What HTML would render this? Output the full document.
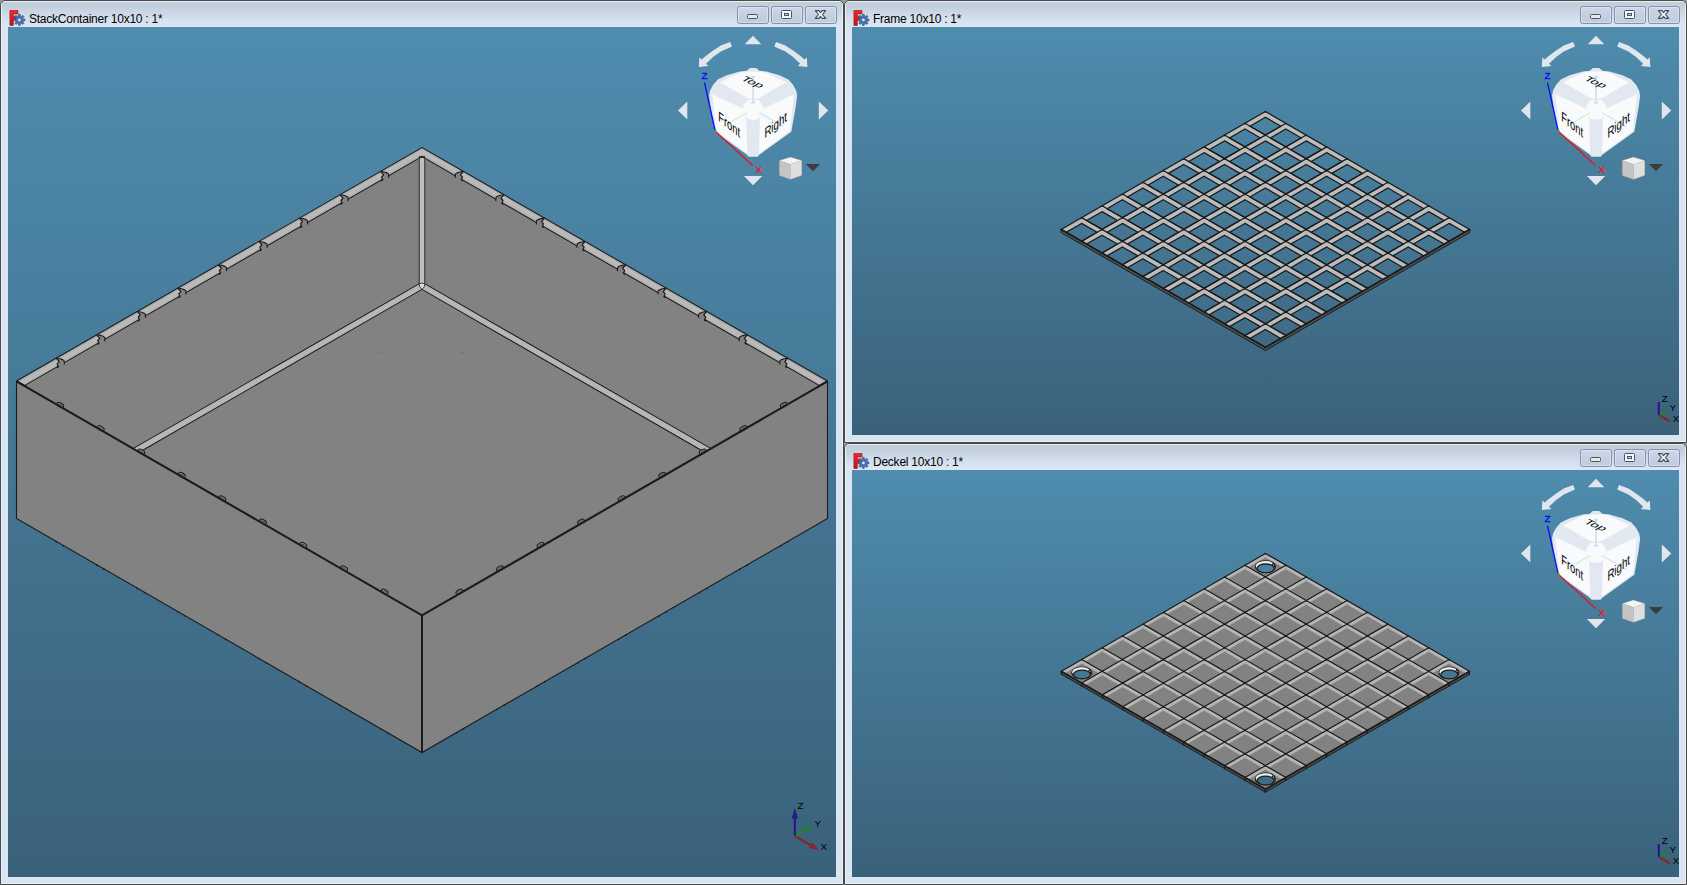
<!DOCTYPE html>
<html><head><meta charset="utf-8"><title>FreeCAD</title>
<style>
html,body{margin:0;padding:0;}
body{width:1687px;height:885px;overflow:hidden;background:#9c9c9c;position:relative;font-family:"Liberation Sans",sans-serif;}
.win{position:absolute;box-sizing:border-box;background:#dae5f3;border:1px solid #4a4a4a;border-radius:5px 5px 0 0;overflow:hidden;box-shadow:inset 0 0 0 1px #e9eff8;}
.win .tb{position:absolute;left:1px;top:1px;right:1px;height:25px;background:linear-gradient(to bottom,#c0cddb 0px,#c5d2e0 7px,#d4dfed 16px,#dbe6f4 23px);}
.win .hl{position:absolute;left:0;top:0;bottom:0;width:1px;background:#eef3fa;}
.ttl{position:absolute;top:10px;font-size:12px;line-height:16px;color:#000;white-space:nowrap;letter-spacing:-0.24px;}
.vp{position:absolute;overflow:hidden;background:linear-gradient(to bottom,#4f8cae,#3a617a);}
.vp svg{position:absolute;left:0;top:0;}
.btn{position:absolute;top:5px;width:32px;height:18px;box-sizing:border-box;border:1px solid #8490ad;border-radius:2.5px;background:linear-gradient(to bottom,#ccd8e7 0,#c4d0e2 50%,#bfccdf 100%);box-shadow:inset 0 0 0 1px rgba(235,241,250,0.45);}
.btn svg{position:absolute;left:0;top:0;}
</style></head><body>
<div class="win" style="left:0px;top:0px;width:844px;height:885px">
<div class="tb"></div>
<svg style="position:absolute;left:7.5px;top:8px" width="18" height="18" viewBox="0 0 18 18">
<defs><linearGradient id="fg" x1="0" y1="0" x2="0" y2="1"><stop offset="0" stop-color="#ff2424"/><stop offset="1" stop-color="#c81212"/></linearGradient></defs>
<path d="M0.9 1.5 H9.0 V4.9 H4.3 V7.2 H7.6 V10.2 H4.3 V16.4 H0.9 Z" fill="url(#fg)" stroke="#8c0f0f" stroke-width="0.6"/>
<g transform="translate(10.4,10.9)">
<path d="M5.64 -0.80 L5.64 0.80 L3.87 0.99 L3.44 2.04 L4.56 3.42 L3.42 4.56 L2.04 3.44 L0.99 3.87 L0.80 5.64 L-0.80 5.64 L-0.99 3.87 L-2.04 3.44 L-3.42 4.56 L-4.56 3.42 L-3.44 2.04 L-3.87 0.99 L-5.64 0.80 L-5.64 -0.80 L-3.87 -0.99 L-3.44 -2.04 L-4.56 -3.42 L-3.42 -4.56 L-2.04 -3.44 L-0.99 -3.87 L-0.80 -5.64 L0.80 -5.64 L0.99 -3.87 L2.04 -3.44 L3.42 -4.56 L4.56 -3.42 L3.44 -2.04 L3.87 -0.99 Z" fill="#4a72b0" stroke="#2d4d85" stroke-width="0.6"/>
<circle r="1.7" fill="#eef2f8" stroke="#2d4d85" stroke-width="0.5"/>
</g></svg>
<div class="ttl" style="left:28px;top:10px">StackContainer 10x10 : 1*</div>
<div class="btn" style="left:736px"><svg width="30" height="16" viewBox="1 1 30 16"><rect x="10.5" y="8.5" width="10" height="4" rx="1" fill="#e9e9e4" stroke="#4a5160" stroke-width="1"/></svg></div><div class="btn" style="left:770px"><svg width="30" height="16" viewBox="1 1 30 16"><rect x="10.5" y="4.5" width="10" height="8" rx="1" fill="#f4f6fa" stroke="#4a5160" stroke-width="1"/><rect x="13.5" y="7.5" width="4" height="2" fill="#c6d2e3" stroke="#4a5160" stroke-width="1"/></svg></div><div class="btn" style="left:804px"><svg width="30" height="16" viewBox="1 1 30 16"><path d="M10.3 4.6 L13.9 4.6 L15.5 6.6 L17.1 4.6 L20.7 4.6 L17.5 8.5 L20.7 12.4 L17.1 12.4 L15.5 10.4 L13.9 12.4 L10.3 12.4 L13.5 8.5 Z" fill="#f1f2f2" stroke="#454b59" stroke-width="1.1" stroke-linejoin="round"/></svg></div>
<div class="vp" style="left:7px;top:26px;width:828px;height:850px">
<svg width="828" height="850" viewBox="8 27 828 850">
<defs><linearGradient id="bg_w1" gradientUnits="userSpaceOnUse" x1="0" y1="27" x2="0" y2="877"><stop offset="0" stop-color="#4f8cae"/><stop offset="1" stop-color="#3a617a"/></linearGradient></defs>
<polygon points="16.50,381.00 422.00,147.50 827.50,381.00 827.50,518.50 422.00,752.50 16.50,518.50" fill="#828282"/>
<defs><linearGradient id="rimgR" gradientUnits="userSpaceOnUse" x1="422.0" y1="147.5" x2="418.05" y2="154.34"><stop offset="0" stop-color="#a2a2a2"/><stop offset="0.3" stop-color="#bbbbbb"/><stop offset="0.65" stop-color="#b8b8b8"/><stop offset="1" stop-color="#a9a9a9"/></linearGradient><linearGradient id="rimgL" gradientUnits="userSpaceOnUse" x1="422.0" y1="147.5" x2="425.95" y2="154.34"><stop offset="0" stop-color="#a2a2a2"/><stop offset="0.3" stop-color="#bbbbbb"/><stop offset="0.65" stop-color="#b8b8b8"/><stop offset="1" stop-color="#a9a9a9"/></linearGradient></defs>
<polygon points="16.50,381.00 422.00,147.50 422.00,156.65 24.45,385.58" fill="url(#rimgL)"/>
<polygon points="422.00,147.50 827.50,381.00 819.55,385.58 422.00,156.65" fill="url(#rimgR)"/>
<polyline points="24.45,385.58 422.00,156.65 819.55,385.58" fill="none" stroke="#1b1b1b" stroke-width="1.05"/>
<rect x="417.6" y="158.15320000000003" width="8.8" height="125.84679999999997" fill="#6c6c6c" fill-opacity="0.55"/>
<rect x="419.4" y="156.65320000000003" width="5.2" height="129.34679999999997" fill="#bebebe"/>
<line x1="419.4" y1="156.65320000000003" x2="419.4" y2="285.0" stroke="#4a4a4a" stroke-width="1.1"/>
<line x1="424.6" y1="156.65320000000003" x2="424.6" y2="285.0" stroke="#4a4a4a" stroke-width="1.1"/>
<path d="M419.0 157.65320000000003 Q422.0 156.05320000000003 425.0 157.65320000000003" fill="none" stroke="#1b1b1b" stroke-width="1.8"/>
<polygon points="419.00,283.90 133.44,448.34 139.71,451.95 422.00,289.40" fill="#b6b6b6"/>
<polygon points="425.00,283.90 710.56,448.34 704.29,451.95 422.00,289.40" fill="#b6b6b6"/>
<line x1="419.00" y1="283.90" x2="133.44" y2="448.34" stroke="#1b1b1b" stroke-width="1.05"/>
<line x1="422.00" y1="289.40" x2="139.71" y2="451.95" stroke="#1b1b1b" stroke-width="1.05"/>
<line x1="425.00" y1="283.90" x2="710.56" y2="448.34" stroke="#1b1b1b" stroke-width="1.05"/>
<line x1="422.00" y1="289.40" x2="704.29" y2="451.95" stroke="#1b1b1b" stroke-width="1.05"/>
<path d="M419.0 283.9 Q422.0 282.2 425.0 283.9 Q424.6 287.6 422.0 289.4 Q419.4 287.6 419.0 283.9 Z" fill="#dcdcdc" stroke="#1b1b1b" stroke-width="0.8"/>
<rect x="380.2" y="352" width="2" height="1" fill="#6c6c6c"/><rect x="461.4" y="352" width="2" height="1" fill="#6c6c6c"/>
<polygon points="380.55,171.35 384.05,171.95 387.05,172.85 388.55,173.95 388.55,176.95 381.05,181.35 382.85,179.85 381.55,177.15 383.55,174.85" fill="#828282"/><polyline points="380.55,171.35 384.05,171.95 387.05,172.85 388.55,173.95 388.75,177.75" fill="none" stroke="#1b1b1b" stroke-width="1.1" stroke-linejoin="round"/><polyline points="380.55,171.35 383.55,174.85 381.55,177.15 382.85,179.85 381.05,181.05" fill="none" stroke="#1b1b1b" stroke-width="1.2" stroke-linejoin="round"/>
<polygon points="463.45,171.35 459.95,171.95 456.95,172.85 455.45,173.95 455.45,176.95 462.95,181.35 461.15,179.85 462.45,177.15 460.45,174.85" fill="#828282"/><polyline points="463.45,171.35 459.95,171.95 456.95,172.85 455.45,173.95 455.25,177.75" fill="none" stroke="#1b1b1b" stroke-width="1.1" stroke-linejoin="round"/><polyline points="463.45,171.35 460.45,174.85 462.45,177.15 461.15,179.85 462.95,181.05" fill="none" stroke="#1b1b1b" stroke-width="1.2" stroke-linejoin="round"/>
<polygon points="340.00,194.70 343.50,195.30 346.50,196.20 348.00,197.30 348.00,200.30 340.50,204.70 342.30,203.20 341.00,200.50 343.00,198.20" fill="#828282"/><polyline points="340.00,194.70 343.50,195.30 346.50,196.20 348.00,197.30 348.20,201.10" fill="none" stroke="#1b1b1b" stroke-width="1.1" stroke-linejoin="round"/><polyline points="340.00,194.70 343.00,198.20 341.00,200.50 342.30,203.20 340.50,204.40" fill="none" stroke="#1b1b1b" stroke-width="1.2" stroke-linejoin="round"/>
<polygon points="504.00,194.70 500.50,195.30 497.50,196.20 496.00,197.30 496.00,200.30 503.50,204.70 501.70,203.20 503.00,200.50 501.00,198.20" fill="#828282"/><polyline points="504.00,194.70 500.50,195.30 497.50,196.20 496.00,197.30 495.80,201.10" fill="none" stroke="#1b1b1b" stroke-width="1.1" stroke-linejoin="round"/><polyline points="504.00,194.70 501.00,198.20 503.00,200.50 501.70,203.20 503.50,204.40" fill="none" stroke="#1b1b1b" stroke-width="1.2" stroke-linejoin="round"/>
<polygon points="299.45,218.05 302.95,218.65 305.95,219.55 307.45,220.65 307.45,223.65 299.95,228.05 301.75,226.55 300.45,223.85 302.45,221.55" fill="#828282"/><polyline points="299.45,218.05 302.95,218.65 305.95,219.55 307.45,220.65 307.65,224.45" fill="none" stroke="#1b1b1b" stroke-width="1.1" stroke-linejoin="round"/><polyline points="299.45,218.05 302.45,221.55 300.45,223.85 301.75,226.55 299.95,227.75" fill="none" stroke="#1b1b1b" stroke-width="1.2" stroke-linejoin="round"/>
<polygon points="544.55,218.05 541.05,218.65 538.05,219.55 536.55,220.65 536.55,223.65 544.05,228.05 542.25,226.55 543.55,223.85 541.55,221.55" fill="#828282"/><polyline points="544.55,218.05 541.05,218.65 538.05,219.55 536.55,220.65 536.35,224.45" fill="none" stroke="#1b1b1b" stroke-width="1.1" stroke-linejoin="round"/><polyline points="544.55,218.05 541.55,221.55 543.55,223.85 542.25,226.55 544.05,227.75" fill="none" stroke="#1b1b1b" stroke-width="1.2" stroke-linejoin="round"/>
<polygon points="258.90,241.40 262.40,242.00 265.40,242.90 266.90,244.00 266.90,247.00 259.40,251.40 261.20,249.90 259.90,247.20 261.90,244.90" fill="#828282"/><polyline points="258.90,241.40 262.40,242.00 265.40,242.90 266.90,244.00 267.10,247.80" fill="none" stroke="#1b1b1b" stroke-width="1.1" stroke-linejoin="round"/><polyline points="258.90,241.40 261.90,244.90 259.90,247.20 261.20,249.90 259.40,251.10" fill="none" stroke="#1b1b1b" stroke-width="1.2" stroke-linejoin="round"/>
<polygon points="585.10,241.40 581.60,242.00 578.60,242.90 577.10,244.00 577.10,247.00 584.60,251.40 582.80,249.90 584.10,247.20 582.10,244.90" fill="#828282"/><polyline points="585.10,241.40 581.60,242.00 578.60,242.90 577.10,244.00 576.90,247.80" fill="none" stroke="#1b1b1b" stroke-width="1.1" stroke-linejoin="round"/><polyline points="585.10,241.40 582.10,244.90 584.10,247.20 582.80,249.90 584.60,251.10" fill="none" stroke="#1b1b1b" stroke-width="1.2" stroke-linejoin="round"/>
<polygon points="218.35,264.75 221.85,265.35 224.85,266.25 226.35,267.35 226.35,270.35 218.85,274.75 220.65,273.25 219.35,270.55 221.35,268.25" fill="#828282"/><polyline points="218.35,264.75 221.85,265.35 224.85,266.25 226.35,267.35 226.55,271.15" fill="none" stroke="#1b1b1b" stroke-width="1.1" stroke-linejoin="round"/><polyline points="218.35,264.75 221.35,268.25 219.35,270.55 220.65,273.25 218.85,274.45" fill="none" stroke="#1b1b1b" stroke-width="1.2" stroke-linejoin="round"/>
<polygon points="625.65,264.75 622.15,265.35 619.15,266.25 617.65,267.35 617.65,270.35 625.15,274.75 623.35,273.25 624.65,270.55 622.65,268.25" fill="#828282"/><polyline points="625.65,264.75 622.15,265.35 619.15,266.25 617.65,267.35 617.45,271.15" fill="none" stroke="#1b1b1b" stroke-width="1.1" stroke-linejoin="round"/><polyline points="625.65,264.75 622.65,268.25 624.65,270.55 623.35,273.25 625.15,274.45" fill="none" stroke="#1b1b1b" stroke-width="1.2" stroke-linejoin="round"/>
<polygon points="177.80,288.10 181.30,288.70 184.30,289.60 185.80,290.70 185.80,293.70 178.30,298.10 180.10,296.60 178.80,293.90 180.80,291.60" fill="#828282"/><polyline points="177.80,288.10 181.30,288.70 184.30,289.60 185.80,290.70 186.00,294.50" fill="none" stroke="#1b1b1b" stroke-width="1.1" stroke-linejoin="round"/><polyline points="177.80,288.10 180.80,291.60 178.80,293.90 180.10,296.60 178.30,297.80" fill="none" stroke="#1b1b1b" stroke-width="1.2" stroke-linejoin="round"/>
<polygon points="666.20,288.10 662.70,288.70 659.70,289.60 658.20,290.70 658.20,293.70 665.70,298.10 663.90,296.60 665.20,293.90 663.20,291.60" fill="#828282"/><polyline points="666.20,288.10 662.70,288.70 659.70,289.60 658.20,290.70 658.00,294.50" fill="none" stroke="#1b1b1b" stroke-width="1.1" stroke-linejoin="round"/><polyline points="666.20,288.10 663.20,291.60 665.20,293.90 663.90,296.60 665.70,297.80" fill="none" stroke="#1b1b1b" stroke-width="1.2" stroke-linejoin="round"/>
<polygon points="137.25,311.45 140.75,312.05 143.75,312.95 145.25,314.05 145.25,317.05 137.75,321.45 139.55,319.95 138.25,317.25 140.25,314.95" fill="#828282"/><polyline points="137.25,311.45 140.75,312.05 143.75,312.95 145.25,314.05 145.45,317.85" fill="none" stroke="#1b1b1b" stroke-width="1.1" stroke-linejoin="round"/><polyline points="137.25,311.45 140.25,314.95 138.25,317.25 139.55,319.95 137.75,321.15" fill="none" stroke="#1b1b1b" stroke-width="1.2" stroke-linejoin="round"/>
<polygon points="706.75,311.45 703.25,312.05 700.25,312.95 698.75,314.05 698.75,317.05 706.25,321.45 704.45,319.95 705.75,317.25 703.75,314.95" fill="#828282"/><polyline points="706.75,311.45 703.25,312.05 700.25,312.95 698.75,314.05 698.55,317.85" fill="none" stroke="#1b1b1b" stroke-width="1.1" stroke-linejoin="round"/><polyline points="706.75,311.45 703.75,314.95 705.75,317.25 704.45,319.95 706.25,321.15" fill="none" stroke="#1b1b1b" stroke-width="1.2" stroke-linejoin="round"/>
<polygon points="96.70,334.80 100.20,335.40 103.20,336.30 104.70,337.40 104.70,340.40 97.20,344.80 99.00,343.30 97.70,340.60 99.70,338.30" fill="#828282"/><polyline points="96.70,334.80 100.20,335.40 103.20,336.30 104.70,337.40 104.90,341.20" fill="none" stroke="#1b1b1b" stroke-width="1.1" stroke-linejoin="round"/><polyline points="96.70,334.80 99.70,338.30 97.70,340.60 99.00,343.30 97.20,344.50" fill="none" stroke="#1b1b1b" stroke-width="1.2" stroke-linejoin="round"/>
<polygon points="747.30,334.80 743.80,335.40 740.80,336.30 739.30,337.40 739.30,340.40 746.80,344.80 745.00,343.30 746.30,340.60 744.30,338.30" fill="#828282"/><polyline points="747.30,334.80 743.80,335.40 740.80,336.30 739.30,337.40 739.10,341.20" fill="none" stroke="#1b1b1b" stroke-width="1.1" stroke-linejoin="round"/><polyline points="747.30,334.80 744.30,338.30 746.30,340.60 745.00,343.30 746.80,344.50" fill="none" stroke="#1b1b1b" stroke-width="1.2" stroke-linejoin="round"/>
<polygon points="56.15,358.15 59.65,358.75 62.65,359.65 64.15,360.75 64.15,363.75 56.65,368.15 58.45,366.65 57.15,363.95 59.15,361.65" fill="#828282"/><polyline points="56.15,358.15 59.65,358.75 62.65,359.65 64.15,360.75 64.35,364.55" fill="none" stroke="#1b1b1b" stroke-width="1.1" stroke-linejoin="round"/><polyline points="56.15,358.15 59.15,361.65 57.15,363.95 58.45,366.65 56.65,367.85" fill="none" stroke="#1b1b1b" stroke-width="1.2" stroke-linejoin="round"/>
<polygon points="787.85,358.15 784.35,358.75 781.35,359.65 779.85,360.75 779.85,363.75 787.35,368.15 785.55,366.65 786.85,363.95 784.85,361.65" fill="#828282"/><polyline points="787.85,358.15 784.35,358.75 781.35,359.65 779.85,360.75 779.65,364.55" fill="none" stroke="#1b1b1b" stroke-width="1.1" stroke-linejoin="round"/><polyline points="787.85,358.15 784.85,361.65 786.85,363.95 785.55,366.65 787.35,367.85" fill="none" stroke="#1b1b1b" stroke-width="1.2" stroke-linejoin="round"/>
<polyline points="16.50,381.00 422.00,147.50 827.50,381.00" fill="none" stroke="#1b1b1b" stroke-width="1.05"/>
<line x1="16.5" y1="381.0" x2="26.75" y2="386.98" stroke="#1b1b1b" stroke-width="1.6"/>
<line x1="827.5" y1="381.0" x2="817.25" y2="386.98" stroke="#1b1b1b" stroke-width="1.6"/>
<polyline points="16.50,381.00 16.50,518.50 422.00,752.50 827.50,518.50 827.50,381.00" fill="none" stroke="#1b1b1b" stroke-width="1.1" stroke-linejoin="miter"/>
<g transform="rotate(30 60.25 404.95)"><ellipse cx="60.25" cy="404.95" rx="3.7" ry="2.0" fill="#8c8c8c" stroke="#1b1b1b" stroke-width="1"/><path d="M58.05 405.55 Q60.25 403.35 62.65 405.15" fill="none" stroke="#3a3a3a" stroke-width="0.7"/></g>
<g transform="rotate(-30 783.75 404.95)"><ellipse cx="783.75" cy="404.95" rx="3.7" ry="2.0" fill="#8c8c8c" stroke="#1b1b1b" stroke-width="1"/><path d="M781.55 405.55 Q783.75 403.35 786.15 405.15" fill="none" stroke="#3a3a3a" stroke-width="0.7"/></g>
<g transform="rotate(30 100.80 428.30)"><ellipse cx="100.80" cy="428.30" rx="3.7" ry="2.0" fill="#8c8c8c" stroke="#1b1b1b" stroke-width="1"/><path d="M98.60 428.90 Q100.80 426.70 103.20 428.50" fill="none" stroke="#3a3a3a" stroke-width="0.7"/></g>
<g transform="rotate(-30 743.20 428.30)"><ellipse cx="743.20" cy="428.30" rx="3.7" ry="2.0" fill="#8c8c8c" stroke="#1b1b1b" stroke-width="1"/><path d="M741.00 428.90 Q743.20 426.70 745.60 428.50" fill="none" stroke="#3a3a3a" stroke-width="0.7"/></g>
<g transform="rotate(30 141.35 451.65)"><ellipse cx="141.35" cy="451.65" rx="3.7" ry="2.0" fill="#8c8c8c" stroke="#1b1b1b" stroke-width="1"/><path d="M139.15 452.25 Q141.35 450.05 143.75 451.85" fill="none" stroke="#3a3a3a" stroke-width="0.7"/></g>
<g transform="rotate(-30 702.65 451.65)"><ellipse cx="702.65" cy="451.65" rx="3.7" ry="2.0" fill="#8c8c8c" stroke="#1b1b1b" stroke-width="1"/><path d="M700.45 452.25 Q702.65 450.05 705.05 451.85" fill="none" stroke="#3a3a3a" stroke-width="0.7"/></g>
<g transform="rotate(30 181.90 475.00)"><ellipse cx="181.90" cy="475.00" rx="3.7" ry="2.0" fill="#8c8c8c" stroke="#1b1b1b" stroke-width="1"/><path d="M179.70 475.60 Q181.90 473.40 184.30 475.20" fill="none" stroke="#3a3a3a" stroke-width="0.7"/></g>
<g transform="rotate(-30 662.10 475.00)"><ellipse cx="662.10" cy="475.00" rx="3.7" ry="2.0" fill="#8c8c8c" stroke="#1b1b1b" stroke-width="1"/><path d="M659.90 475.60 Q662.10 473.40 664.50 475.20" fill="none" stroke="#3a3a3a" stroke-width="0.7"/></g>
<g transform="rotate(30 222.45 498.35)"><ellipse cx="222.45" cy="498.35" rx="3.7" ry="2.0" fill="#8c8c8c" stroke="#1b1b1b" stroke-width="1"/><path d="M220.25 498.95 Q222.45 496.75 224.85 498.55" fill="none" stroke="#3a3a3a" stroke-width="0.7"/></g>
<g transform="rotate(-30 621.55 498.35)"><ellipse cx="621.55" cy="498.35" rx="3.7" ry="2.0" fill="#8c8c8c" stroke="#1b1b1b" stroke-width="1"/><path d="M619.35 498.95 Q621.55 496.75 623.95 498.55" fill="none" stroke="#3a3a3a" stroke-width="0.7"/></g>
<g transform="rotate(30 263.00 521.70)"><ellipse cx="263.00" cy="521.70" rx="3.7" ry="2.0" fill="#8c8c8c" stroke="#1b1b1b" stroke-width="1"/><path d="M260.80 522.30 Q263.00 520.10 265.40 521.90" fill="none" stroke="#3a3a3a" stroke-width="0.7"/></g>
<g transform="rotate(-30 581.00 521.70)"><ellipse cx="581.00" cy="521.70" rx="3.7" ry="2.0" fill="#8c8c8c" stroke="#1b1b1b" stroke-width="1"/><path d="M578.80 522.30 Q581.00 520.10 583.40 521.90" fill="none" stroke="#3a3a3a" stroke-width="0.7"/></g>
<g transform="rotate(30 303.55 545.05)"><ellipse cx="303.55" cy="545.05" rx="3.7" ry="2.0" fill="#8c8c8c" stroke="#1b1b1b" stroke-width="1"/><path d="M301.35 545.65 Q303.55 543.45 305.95 545.25" fill="none" stroke="#3a3a3a" stroke-width="0.7"/></g>
<g transform="rotate(-30 540.45 545.05)"><ellipse cx="540.45" cy="545.05" rx="3.7" ry="2.0" fill="#8c8c8c" stroke="#1b1b1b" stroke-width="1"/><path d="M538.25 545.65 Q540.45 543.45 542.85 545.25" fill="none" stroke="#3a3a3a" stroke-width="0.7"/></g>
<g transform="rotate(30 344.10 568.40)"><ellipse cx="344.10" cy="568.40" rx="3.7" ry="2.0" fill="#8c8c8c" stroke="#1b1b1b" stroke-width="1"/><path d="M341.90 569.00 Q344.10 566.80 346.50 568.60" fill="none" stroke="#3a3a3a" stroke-width="0.7"/></g>
<g transform="rotate(-30 499.90 568.40)"><ellipse cx="499.90" cy="568.40" rx="3.7" ry="2.0" fill="#8c8c8c" stroke="#1b1b1b" stroke-width="1"/><path d="M497.70 569.00 Q499.90 566.80 502.30 568.60" fill="none" stroke="#3a3a3a" stroke-width="0.7"/></g>
<g transform="rotate(30 384.65 591.75)"><ellipse cx="384.65" cy="591.75" rx="3.7" ry="2.0" fill="#8c8c8c" stroke="#1b1b1b" stroke-width="1"/><path d="M382.45 592.35 Q384.65 590.15 387.05 591.95" fill="none" stroke="#3a3a3a" stroke-width="0.7"/></g>
<g transform="rotate(-30 459.35 591.75)"><ellipse cx="459.35" cy="591.75" rx="3.7" ry="2.0" fill="#8c8c8c" stroke="#1b1b1b" stroke-width="1"/><path d="M457.15 592.35 Q459.35 590.15 461.75 591.95" fill="none" stroke="#3a3a3a" stroke-width="0.7"/></g>
<polyline points="16.50,381.30 422.00,615.30 827.50,381.30" fill="none" stroke="#1b1b1b" stroke-width="2.1" stroke-linejoin="miter"/>
<line x1="422.0" y1="615.0" x2="422.0" y2="752.5" stroke="#1b1b1b" stroke-width="2"/>
<rect x="55.45" y="541.07" width="1.3" height="1.5" fill="#1b1b1b"/>
<rect x="787.35" y="541.07" width="1.3" height="1.5" fill="#1b1b1b"/>
<rect x="62.65" y="545.22" width="1.3" height="1.5" fill="#1b1b1b"/>
<rect x="780.15" y="545.22" width="1.3" height="1.5" fill="#1b1b1b"/>
<rect x="96.00" y="564.42" width="1.3" height="1.5" fill="#1b1b1b"/>
<rect x="746.80" y="564.42" width="1.3" height="1.5" fill="#1b1b1b"/>
<rect x="103.20" y="568.57" width="1.3" height="1.5" fill="#1b1b1b"/>
<rect x="739.60" y="568.57" width="1.3" height="1.5" fill="#1b1b1b"/>
<rect x="136.55" y="587.77" width="1.3" height="1.5" fill="#1b1b1b"/>
<rect x="706.25" y="587.77" width="1.3" height="1.5" fill="#1b1b1b"/>
<rect x="143.75" y="591.92" width="1.3" height="1.5" fill="#1b1b1b"/>
<rect x="699.05" y="591.92" width="1.3" height="1.5" fill="#1b1b1b"/>
<rect x="177.10" y="611.12" width="1.3" height="1.5" fill="#1b1b1b"/>
<rect x="665.70" y="611.12" width="1.3" height="1.5" fill="#1b1b1b"/>
<rect x="184.30" y="615.27" width="1.3" height="1.5" fill="#1b1b1b"/>
<rect x="658.50" y="615.27" width="1.3" height="1.5" fill="#1b1b1b"/>
<rect x="217.65" y="634.47" width="1.3" height="1.5" fill="#1b1b1b"/>
<rect x="625.15" y="634.47" width="1.3" height="1.5" fill="#1b1b1b"/>
<rect x="224.85" y="638.62" width="1.3" height="1.5" fill="#1b1b1b"/>
<rect x="617.95" y="638.62" width="1.3" height="1.5" fill="#1b1b1b"/>
<rect x="258.20" y="657.82" width="1.3" height="1.5" fill="#1b1b1b"/>
<rect x="584.60" y="657.82" width="1.3" height="1.5" fill="#1b1b1b"/>
<rect x="265.40" y="661.97" width="1.3" height="1.5" fill="#1b1b1b"/>
<rect x="577.40" y="661.97" width="1.3" height="1.5" fill="#1b1b1b"/>
<rect x="298.75" y="681.17" width="1.3" height="1.5" fill="#1b1b1b"/>
<rect x="544.05" y="681.17" width="1.3" height="1.5" fill="#1b1b1b"/>
<rect x="305.95" y="685.32" width="1.3" height="1.5" fill="#1b1b1b"/>
<rect x="536.85" y="685.32" width="1.3" height="1.5" fill="#1b1b1b"/>
<rect x="339.30" y="704.52" width="1.3" height="1.5" fill="#1b1b1b"/>
<rect x="503.50" y="704.52" width="1.3" height="1.5" fill="#1b1b1b"/>
<rect x="346.50" y="708.67" width="1.3" height="1.5" fill="#1b1b1b"/>
<rect x="496.30" y="708.67" width="1.3" height="1.5" fill="#1b1b1b"/>
<rect x="379.85" y="727.87" width="1.3" height="1.5" fill="#1b1b1b"/>
<rect x="462.95" y="727.87" width="1.3" height="1.5" fill="#1b1b1b"/>
<rect x="387.05" y="732.02" width="1.3" height="1.5" fill="#1b1b1b"/>
<rect x="455.75" y="732.02" width="1.3" height="1.5" fill="#1b1b1b"/><g transform="translate(0 0)">
<polygon points="753.00,35.80 744.70,44.20 761.30,44.20" fill="#dfe6ee"/>
<polygon points="753.00,185.30 743.90,176.00 762.20,176.00" fill="#dfe6ee"/>
<polygon points="678.00,110.50 687.30,101.60 687.30,119.40" fill="#dfe6ee"/>
<polygon points="828.30,110.50 818.80,101.60 818.80,119.40" fill="#dfe6ee"/>
<polygon points="730.10,41.90 720.80,45.40 713.10,50.40 705.40,56.20 701.80,59.60 699.40,57.40 698.80,67.00 708.50,66.00 706.00,63.80 713.10,57.00 720.80,51.60 732.00,46.60" fill="#dfe6ee"/>
<polygon points="776.10,41.90 785.40,45.40 793.10,50.40 800.80,56.20 804.40,59.60 806.80,57.40 807.40,67.00 797.70,66.00 800.20,63.80 793.10,57.00 785.40,51.60 774.20,46.60" fill="#dfe6ee"/>
<polygon points="749.90,67.90 746.90,70.80 739.80,71.40 726.70,75.30 717.80,79.50 713.00,85.00 710.10,90.50 709.00,95.50 710.70,108.00 714.90,131.70 746.90,154.80 748.60,156.80 757.60,156.80 759.30,154.80 791.30,131.70 795.50,108.00 797.20,95.50 796.10,90.50 793.20,85.00 788.40,79.50 779.50,75.30 766.40,71.40 759.30,70.80 756.30,67.90" fill="#e1e8ef"/>
<polygon points="747.50,71.60 741.20,72.20 719.90,82.30 747.90,98.50 758.30,98.50 786.30,82.30 765.00,72.20 758.70,71.60" fill="#f8fafb"/>
<polygon points="712.30,94.20 743.40,108.80 746.30,120.00 747.30,153.40 716.20,131.00" fill="#f8fafb"/>
<polygon points="793.90,94.20 762.80,108.80 759.90,120.00 758.90,153.40 790.00,131.00" fill="#f8fafb"/>
<polygon points="764.00,109.40 758.55,118.84 747.65,118.84 742.20,109.40 747.65,99.96 758.55,99.96" fill="#f8fafb"/>
<circle cx="753.1" cy="109.60000000000001" r="10.3" fill="#f8fafb"/>
<path d="M753.1 76.8 V102.8 M751.1 76.8 H755.1 M751.1 102.8 H755.1" stroke="#c9dbe6" stroke-width="1.4" fill="none"/>
<line x1="746.8" y1="112.6" x2="723.5" y2="126.6" stroke="#bfeec0" stroke-width="1.1"/>
<line x1="759.2" y1="112.6" x2="783.5" y2="126.8" stroke="#cfdfe9" stroke-width="1.1"/>
<text transform="matrix(0.94 0.42 -0.66 0.40 740.0 79.4)" x="0" y="0" font-size="13" fill="#000" style="font-family:'Liberation Sans',sans-serif">Top</text>
<text transform="matrix(0.67 0.53 0 1 718.2 120.6)" x="0" y="0" font-size="14" fill="#000" style="font-family:'Liberation Sans',sans-serif">Front</text>
<text transform="matrix(0.69 -0.54 0 1 764.4 138.4)" x="0" y="0" font-size="14" fill="#000" style="font-family:'Liberation Sans',sans-serif">Right</text>
<line x1="715.3" y1="131.3" x2="704.5" y2="82.6" stroke="#0a0aff" stroke-width="1.3"/>
<line x1="715.3" y1="131.3" x2="752.6" y2="165.4" stroke="#e8141c" stroke-width="1.3"/>
<rect x="714.6" y="129.9" width="1.8" height="1.8" fill="#18c818"/>
<text x="701.6" y="79.0" font-size="9.6" fill="#0a0aff" stroke="#0a0aff" stroke-width="0.35" style="font-family:'Liberation Sans',sans-serif">Z</text>
<text x="755.4" y="173.0" font-size="9.6" fill="#f0141c" stroke="#f0141c" stroke-width="0.35" style="font-family:'Liberation Sans',sans-serif">X</text>
<polygon points="790.40,156.90 801.90,160.50 790.40,164.20 779.20,160.50" fill="#f3f3f3"/>
<polygon points="779.20,160.50 790.40,164.20 790.40,179.60 779.20,175.60" fill="#c4c4c4"/>
<polygon points="801.90,160.50 790.40,164.20 790.40,179.60 801.90,175.40" fill="#dfdfdf"/>
<polygon points="790.40,156.90 801.90,160.50 801.90,175.40 790.40,179.60 779.20,175.60 779.20,160.50" fill="none" stroke="#8a7f7a" stroke-opacity="0.55" stroke-width="0.7"/>
<polygon points="805.80,164.00 820.10,164.00 813.00,171.20" fill="#3c3c3c"/>
</g><line x1="794.80" y1="835.80" x2="810.41" y2="845.09" stroke="#8c2222" stroke-width="2.1"/><polygon points="819.00,850.20 808.87,847.66 811.94,842.51" fill="#8c2222"/>
<line x1="794.80" y1="835.80" x2="806.58" y2="828.96" stroke="#1c8a1c" stroke-width="2.1"/><polygon points="812.20,825.70 807.93,831.30 805.22,826.63" fill="#1c8a1c"/>
<line x1="794.80" y1="835.80" x2="794.80" y2="818.80" stroke="#26188c" stroke-width="2.1"/><polygon points="794.80,807.80 797.90,818.80 791.70,818.80" fill="#26188c"/>
<text x="797.4" y="809.0" font-size="9.8" fill="#000" style="font-family:'Liberation Sans',sans-serif">Z</text>
<text x="814.4" y="827.0" font-size="9.8" fill="#000" style="font-family:'Liberation Sans',sans-serif">Y</text>
<text x="820.4" y="850.0" font-size="9.8" fill="#000" style="font-family:'Liberation Sans',sans-serif">X</text>
</svg></div>
</div>
<div class="win" style="left:844px;top:0px;width:843px;height:443px">
<div class="tb"></div>
<svg style="position:absolute;left:7.5px;top:8px" width="18" height="18" viewBox="0 0 18 18">
<defs><linearGradient id="fg" x1="0" y1="0" x2="0" y2="1"><stop offset="0" stop-color="#ff2424"/><stop offset="1" stop-color="#c81212"/></linearGradient></defs>
<path d="M0.9 1.5 H9.0 V4.9 H4.3 V7.2 H7.6 V10.2 H4.3 V16.4 H0.9 Z" fill="url(#fg)" stroke="#8c0f0f" stroke-width="0.6"/>
<g transform="translate(10.4,10.9)">
<path d="M5.64 -0.80 L5.64 0.80 L3.87 0.99 L3.44 2.04 L4.56 3.42 L3.42 4.56 L2.04 3.44 L0.99 3.87 L0.80 5.64 L-0.80 5.64 L-0.99 3.87 L-2.04 3.44 L-3.42 4.56 L-4.56 3.42 L-3.44 2.04 L-3.87 0.99 L-5.64 0.80 L-5.64 -0.80 L-3.87 -0.99 L-3.44 -2.04 L-4.56 -3.42 L-3.42 -4.56 L-2.04 -3.44 L-0.99 -3.87 L-0.80 -5.64 L0.80 -5.64 L0.99 -3.87 L2.04 -3.44 L3.42 -4.56 L4.56 -3.42 L3.44 -2.04 L3.87 -0.99 Z" fill="#4a72b0" stroke="#2d4d85" stroke-width="0.6"/>
<circle r="1.7" fill="#eef2f8" stroke="#2d4d85" stroke-width="0.5"/>
</g></svg>
<div class="ttl" style="left:28px;top:10px">Frame 10x10 : 1*</div>
<div class="btn" style="left:735px"><svg width="30" height="16" viewBox="1 1 30 16"><rect x="10.5" y="8.5" width="10" height="4" rx="1" fill="#e9e9e4" stroke="#4a5160" stroke-width="1"/></svg></div><div class="btn" style="left:769px"><svg width="30" height="16" viewBox="1 1 30 16"><rect x="10.5" y="4.5" width="10" height="8" rx="1" fill="#f4f6fa" stroke="#4a5160" stroke-width="1"/><rect x="13.5" y="7.5" width="4" height="2" fill="#c6d2e3" stroke="#4a5160" stroke-width="1"/></svg></div><div class="btn" style="left:803px"><svg width="30" height="16" viewBox="1 1 30 16"><path d="M10.3 4.6 L13.9 4.6 L15.5 6.6 L17.1 4.6 L20.7 4.6 L17.5 8.5 L20.7 12.4 L17.1 12.4 L15.5 10.4 L13.9 12.4 L10.3 12.4 L13.5 8.5 Z" fill="#f1f2f2" stroke="#454b59" stroke-width="1.1" stroke-linejoin="round"/></svg></div>
<div class="vp" style="left:7px;top:26px;width:827px;height:408px">
<svg width="827" height="408" viewBox="852 27 827 408">
<defs><linearGradient id="bg_w2" gradientUnits="userSpaceOnUse" x1="0" y1="27" x2="0" y2="435"><stop offset="0" stop-color="#4f8cae"/><stop offset="1" stop-color="#3a617a"/></linearGradient></defs>
<polygon points="1061.20,229.40 1265.40,347.30 1469.60,229.40 1469.60,232.60 1265.40,350.50 1061.20,232.60" fill="#505050" stroke="#1b1b1b" stroke-width="1" stroke-linejoin="round"/>
<path d="M1265.40 111.50 L1469.60 229.40 L1265.40 347.30 L1061.20 229.40 Z M1265.40 117.28 L1280.82 126.18 L1265.40 135.08 L1249.98 126.18 Z M1244.98 129.07 L1260.40 137.97 L1244.98 146.87 L1229.56 137.97 Z M1224.56 140.86 L1239.98 149.76 L1224.56 158.66 L1209.14 149.76 Z M1204.14 152.65 L1219.56 161.55 L1204.14 170.45 L1188.72 161.55 Z M1183.72 164.44 L1199.14 173.34 L1183.72 182.24 L1168.30 173.34 Z M1163.30 176.23 L1178.72 185.13 L1163.30 194.03 L1147.88 185.13 Z M1142.88 188.02 L1158.30 196.92 L1142.88 205.82 L1127.46 196.92 Z M1122.46 199.81 L1137.88 208.71 L1122.46 217.61 L1107.04 208.71 Z M1102.04 211.60 L1117.46 220.50 L1102.04 229.40 L1086.62 220.50 Z M1081.62 223.39 L1097.04 232.29 L1081.62 241.19 L1066.20 232.29 Z M1285.82 129.07 L1301.24 137.97 L1285.82 146.87 L1270.40 137.97 Z M1265.40 140.86 L1280.82 149.76 L1265.40 158.66 L1249.98 149.76 Z M1244.98 152.65 L1260.40 161.55 L1244.98 170.45 L1229.56 161.55 Z M1224.56 164.44 L1239.98 173.34 L1224.56 182.24 L1209.14 173.34 Z M1204.14 176.23 L1219.56 185.13 L1204.14 194.03 L1188.72 185.13 Z M1183.72 188.02 L1199.14 196.92 L1183.72 205.82 L1168.30 196.92 Z M1163.30 199.81 L1178.72 208.71 L1163.30 217.61 L1147.88 208.71 Z M1142.88 211.60 L1158.30 220.50 L1142.88 229.40 L1127.46 220.50 Z M1122.46 223.39 L1137.88 232.29 L1122.46 241.19 L1107.04 232.29 Z M1102.04 235.18 L1117.46 244.08 L1102.04 252.98 L1086.62 244.08 Z M1306.24 140.86 L1321.66 149.76 L1306.24 158.66 L1290.82 149.76 Z M1285.82 152.65 L1301.24 161.55 L1285.82 170.45 L1270.40 161.55 Z M1265.40 164.44 L1280.82 173.34 L1265.40 182.24 L1249.98 173.34 Z M1244.98 176.23 L1260.40 185.13 L1244.98 194.03 L1229.56 185.13 Z M1224.56 188.02 L1239.98 196.92 L1224.56 205.82 L1209.14 196.92 Z M1204.14 199.81 L1219.56 208.71 L1204.14 217.61 L1188.72 208.71 Z M1183.72 211.60 L1199.14 220.50 L1183.72 229.40 L1168.30 220.50 Z M1163.30 223.39 L1178.72 232.29 L1163.30 241.19 L1147.88 232.29 Z M1142.88 235.18 L1158.30 244.08 L1142.88 252.98 L1127.46 244.08 Z M1122.46 246.97 L1137.88 255.87 L1122.46 264.77 L1107.04 255.87 Z M1326.66 152.65 L1342.08 161.55 L1326.66 170.45 L1311.24 161.55 Z M1306.24 164.44 L1321.66 173.34 L1306.24 182.24 L1290.82 173.34 Z M1285.82 176.23 L1301.24 185.13 L1285.82 194.03 L1270.40 185.13 Z M1265.40 188.02 L1280.82 196.92 L1265.40 205.82 L1249.98 196.92 Z M1244.98 199.81 L1260.40 208.71 L1244.98 217.61 L1229.56 208.71 Z M1224.56 211.60 L1239.98 220.50 L1224.56 229.40 L1209.14 220.50 Z M1204.14 223.39 L1219.56 232.29 L1204.14 241.19 L1188.72 232.29 Z M1183.72 235.18 L1199.14 244.08 L1183.72 252.98 L1168.30 244.08 Z M1163.30 246.97 L1178.72 255.87 L1163.30 264.77 L1147.88 255.87 Z M1142.88 258.76 L1158.30 267.66 L1142.88 276.56 L1127.46 267.66 Z M1347.08 164.44 L1362.50 173.34 L1347.08 182.24 L1331.66 173.34 Z M1326.66 176.23 L1342.08 185.13 L1326.66 194.03 L1311.24 185.13 Z M1306.24 188.02 L1321.66 196.92 L1306.24 205.82 L1290.82 196.92 Z M1285.82 199.81 L1301.24 208.71 L1285.82 217.61 L1270.40 208.71 Z M1265.40 211.60 L1280.82 220.50 L1265.40 229.40 L1249.98 220.50 Z M1244.98 223.39 L1260.40 232.29 L1244.98 241.19 L1229.56 232.29 Z M1224.56 235.18 L1239.98 244.08 L1224.56 252.98 L1209.14 244.08 Z M1204.14 246.97 L1219.56 255.87 L1204.14 264.77 L1188.72 255.87 Z M1183.72 258.76 L1199.14 267.66 L1183.72 276.56 L1168.30 267.66 Z M1163.30 270.55 L1178.72 279.45 L1163.30 288.35 L1147.88 279.45 Z M1367.50 176.23 L1382.92 185.13 L1367.50 194.03 L1352.08 185.13 Z M1347.08 188.02 L1362.50 196.92 L1347.08 205.82 L1331.66 196.92 Z M1326.66 199.81 L1342.08 208.71 L1326.66 217.61 L1311.24 208.71 Z M1306.24 211.60 L1321.66 220.50 L1306.24 229.40 L1290.82 220.50 Z M1285.82 223.39 L1301.24 232.29 L1285.82 241.19 L1270.40 232.29 Z M1265.40 235.18 L1280.82 244.08 L1265.40 252.98 L1249.98 244.08 Z M1244.98 246.97 L1260.40 255.87 L1244.98 264.77 L1229.56 255.87 Z M1224.56 258.76 L1239.98 267.66 L1224.56 276.56 L1209.14 267.66 Z M1204.14 270.55 L1219.56 279.45 L1204.14 288.35 L1188.72 279.45 Z M1183.72 282.34 L1199.14 291.24 L1183.72 300.14 L1168.30 291.24 Z M1387.92 188.02 L1403.34 196.92 L1387.92 205.82 L1372.50 196.92 Z M1367.50 199.81 L1382.92 208.71 L1367.50 217.61 L1352.08 208.71 Z M1347.08 211.60 L1362.50 220.50 L1347.08 229.40 L1331.66 220.50 Z M1326.66 223.39 L1342.08 232.29 L1326.66 241.19 L1311.24 232.29 Z M1306.24 235.18 L1321.66 244.08 L1306.24 252.98 L1290.82 244.08 Z M1285.82 246.97 L1301.24 255.87 L1285.82 264.77 L1270.40 255.87 Z M1265.40 258.76 L1280.82 267.66 L1265.40 276.56 L1249.98 267.66 Z M1244.98 270.55 L1260.40 279.45 L1244.98 288.35 L1229.56 279.45 Z M1224.56 282.34 L1239.98 291.24 L1224.56 300.14 L1209.14 291.24 Z M1204.14 294.13 L1219.56 303.03 L1204.14 311.93 L1188.72 303.03 Z M1408.34 199.81 L1423.76 208.71 L1408.34 217.61 L1392.92 208.71 Z M1387.92 211.60 L1403.34 220.50 L1387.92 229.40 L1372.50 220.50 Z M1367.50 223.39 L1382.92 232.29 L1367.50 241.19 L1352.08 232.29 Z M1347.08 235.18 L1362.50 244.08 L1347.08 252.98 L1331.66 244.08 Z M1326.66 246.97 L1342.08 255.87 L1326.66 264.77 L1311.24 255.87 Z M1306.24 258.76 L1321.66 267.66 L1306.24 276.56 L1290.82 267.66 Z M1285.82 270.55 L1301.24 279.45 L1285.82 288.35 L1270.40 279.45 Z M1265.40 282.34 L1280.82 291.24 L1265.40 300.14 L1249.98 291.24 Z M1244.98 294.13 L1260.40 303.03 L1244.98 311.93 L1229.56 303.03 Z M1224.56 305.92 L1239.98 314.82 L1224.56 323.72 L1209.14 314.82 Z M1428.76 211.60 L1444.18 220.50 L1428.76 229.40 L1413.34 220.50 Z M1408.34 223.39 L1423.76 232.29 L1408.34 241.19 L1392.92 232.29 Z M1387.92 235.18 L1403.34 244.08 L1387.92 252.98 L1372.50 244.08 Z M1367.50 246.97 L1382.92 255.87 L1367.50 264.77 L1352.08 255.87 Z M1347.08 258.76 L1362.50 267.66 L1347.08 276.56 L1331.66 267.66 Z M1326.66 270.55 L1342.08 279.45 L1326.66 288.35 L1311.24 279.45 Z M1306.24 282.34 L1321.66 291.24 L1306.24 300.14 L1290.82 291.24 Z M1285.82 294.13 L1301.24 303.03 L1285.82 311.93 L1270.40 303.03 Z M1265.40 305.92 L1280.82 314.82 L1265.40 323.72 L1249.98 314.82 Z M1244.98 317.71 L1260.40 326.61 L1244.98 335.51 L1229.56 326.61 Z M1449.18 223.39 L1464.60 232.29 L1449.18 241.19 L1433.76 232.29 Z M1428.76 235.18 L1444.18 244.08 L1428.76 252.98 L1413.34 244.08 Z M1408.34 246.97 L1423.76 255.87 L1408.34 264.77 L1392.92 255.87 Z M1387.92 258.76 L1403.34 267.66 L1387.92 276.56 L1372.50 267.66 Z M1367.50 270.55 L1382.92 279.45 L1367.50 288.35 L1352.08 279.45 Z M1347.08 282.34 L1362.50 291.24 L1347.08 300.14 L1331.66 291.24 Z M1326.66 294.13 L1342.08 303.03 L1326.66 311.93 L1311.24 303.03 Z M1306.24 305.92 L1321.66 314.82 L1306.24 323.72 L1290.82 314.82 Z M1285.82 317.71 L1301.24 326.61 L1285.82 335.51 L1270.40 326.61 Z M1265.40 329.50 L1280.82 338.40 L1265.40 347.30 L1249.98 338.40 Z " fill="#bcbcbc" fill-rule="evenodd" stroke="#1b1b1b" stroke-width="1.25" stroke-linejoin="miter"/>
<path d="M1285.82 123.29 L1081.62 241.19 M1244.98 123.29 L1449.18 241.19 M1306.24 135.08 L1102.04 252.98 M1224.56 135.08 L1428.76 252.98 M1326.66 146.87 L1122.46 264.77 M1204.14 146.87 L1408.34 264.77 M1347.08 158.66 L1142.88 276.56 M1183.72 158.66 L1387.92 276.56 M1367.50 170.45 L1163.30 288.35 M1163.30 170.45 L1367.50 288.35 M1387.92 182.24 L1183.72 300.14 M1142.88 182.24 L1347.08 300.14 M1408.34 194.03 L1204.14 311.93 M1122.46 194.03 L1326.66 311.93 M1428.76 205.82 L1224.56 323.72 M1102.04 205.82 L1306.24 323.72 M1449.18 217.61 L1244.98 335.51 M1081.62 217.61 L1285.82 335.51 " fill="none" stroke="#1b1b1b" stroke-width="1.25"/>
<circle cx="1265.40" cy="111.80" r="0.9" fill="#1b1b1b"/>
<circle cx="1244.98" cy="123.59" r="0.9" fill="#1b1b1b"/>
<circle cx="1224.56" cy="135.38" r="0.9" fill="#1b1b1b"/>
<circle cx="1204.14" cy="147.17" r="0.9" fill="#1b1b1b"/>
<circle cx="1183.72" cy="158.96" r="0.9" fill="#1b1b1b"/>
<circle cx="1163.30" cy="170.75" r="0.9" fill="#1b1b1b"/>
<circle cx="1142.88" cy="182.54" r="0.9" fill="#1b1b1b"/>
<circle cx="1122.46" cy="194.33" r="0.9" fill="#1b1b1b"/>
<circle cx="1102.04" cy="206.12" r="0.9" fill="#1b1b1b"/>
<circle cx="1081.62" cy="217.91" r="0.9" fill="#1b1b1b"/>
<circle cx="1061.20" cy="229.70" r="0.9" fill="#1b1b1b"/>
<circle cx="1285.82" cy="123.59" r="0.9" fill="#1b1b1b"/>
<circle cx="1265.40" cy="135.38" r="0.9" fill="#1b1b1b"/>
<circle cx="1244.98" cy="147.17" r="0.9" fill="#1b1b1b"/>
<circle cx="1224.56" cy="158.96" r="0.9" fill="#1b1b1b"/>
<circle cx="1204.14" cy="170.75" r="0.9" fill="#1b1b1b"/>
<circle cx="1183.72" cy="182.54" r="0.9" fill="#1b1b1b"/>
<circle cx="1163.30" cy="194.33" r="0.9" fill="#1b1b1b"/>
<circle cx="1142.88" cy="206.12" r="0.9" fill="#1b1b1b"/>
<circle cx="1122.46" cy="217.91" r="0.9" fill="#1b1b1b"/>
<circle cx="1102.04" cy="229.70" r="0.9" fill="#1b1b1b"/>
<circle cx="1081.62" cy="241.49" r="0.9" fill="#1b1b1b"/>
<circle cx="1306.24" cy="135.38" r="0.9" fill="#1b1b1b"/>
<circle cx="1285.82" cy="147.17" r="0.9" fill="#1b1b1b"/>
<circle cx="1265.40" cy="158.96" r="0.9" fill="#1b1b1b"/>
<circle cx="1244.98" cy="170.75" r="0.9" fill="#1b1b1b"/>
<circle cx="1224.56" cy="182.54" r="0.9" fill="#1b1b1b"/>
<circle cx="1204.14" cy="194.33" r="0.9" fill="#1b1b1b"/>
<circle cx="1183.72" cy="206.12" r="0.9" fill="#1b1b1b"/>
<circle cx="1163.30" cy="217.91" r="0.9" fill="#1b1b1b"/>
<circle cx="1142.88" cy="229.70" r="0.9" fill="#1b1b1b"/>
<circle cx="1122.46" cy="241.49" r="0.9" fill="#1b1b1b"/>
<circle cx="1102.04" cy="253.28" r="0.9" fill="#1b1b1b"/>
<circle cx="1326.66" cy="147.17" r="0.9" fill="#1b1b1b"/>
<circle cx="1306.24" cy="158.96" r="0.9" fill="#1b1b1b"/>
<circle cx="1285.82" cy="170.75" r="0.9" fill="#1b1b1b"/>
<circle cx="1265.40" cy="182.54" r="0.9" fill="#1b1b1b"/>
<circle cx="1244.98" cy="194.33" r="0.9" fill="#1b1b1b"/>
<circle cx="1224.56" cy="206.12" r="0.9" fill="#1b1b1b"/>
<circle cx="1204.14" cy="217.91" r="0.9" fill="#1b1b1b"/>
<circle cx="1183.72" cy="229.70" r="0.9" fill="#1b1b1b"/>
<circle cx="1163.30" cy="241.49" r="0.9" fill="#1b1b1b"/>
<circle cx="1142.88" cy="253.28" r="0.9" fill="#1b1b1b"/>
<circle cx="1122.46" cy="265.07" r="0.9" fill="#1b1b1b"/>
<circle cx="1347.08" cy="158.96" r="0.9" fill="#1b1b1b"/>
<circle cx="1326.66" cy="170.75" r="0.9" fill="#1b1b1b"/>
<circle cx="1306.24" cy="182.54" r="0.9" fill="#1b1b1b"/>
<circle cx="1285.82" cy="194.33" r="0.9" fill="#1b1b1b"/>
<circle cx="1265.40" cy="206.12" r="0.9" fill="#1b1b1b"/>
<circle cx="1244.98" cy="217.91" r="0.9" fill="#1b1b1b"/>
<circle cx="1224.56" cy="229.70" r="0.9" fill="#1b1b1b"/>
<circle cx="1204.14" cy="241.49" r="0.9" fill="#1b1b1b"/>
<circle cx="1183.72" cy="253.28" r="0.9" fill="#1b1b1b"/>
<circle cx="1163.30" cy="265.07" r="0.9" fill="#1b1b1b"/>
<circle cx="1142.88" cy="276.86" r="0.9" fill="#1b1b1b"/>
<circle cx="1367.50" cy="170.75" r="0.9" fill="#1b1b1b"/>
<circle cx="1347.08" cy="182.54" r="0.9" fill="#1b1b1b"/>
<circle cx="1326.66" cy="194.33" r="0.9" fill="#1b1b1b"/>
<circle cx="1306.24" cy="206.12" r="0.9" fill="#1b1b1b"/>
<circle cx="1285.82" cy="217.91" r="0.9" fill="#1b1b1b"/>
<circle cx="1265.40" cy="229.70" r="0.9" fill="#1b1b1b"/>
<circle cx="1244.98" cy="241.49" r="0.9" fill="#1b1b1b"/>
<circle cx="1224.56" cy="253.28" r="0.9" fill="#1b1b1b"/>
<circle cx="1204.14" cy="265.07" r="0.9" fill="#1b1b1b"/>
<circle cx="1183.72" cy="276.86" r="0.9" fill="#1b1b1b"/>
<circle cx="1163.30" cy="288.65" r="0.9" fill="#1b1b1b"/>
<circle cx="1387.92" cy="182.54" r="0.9" fill="#1b1b1b"/>
<circle cx="1367.50" cy="194.33" r="0.9" fill="#1b1b1b"/>
<circle cx="1347.08" cy="206.12" r="0.9" fill="#1b1b1b"/>
<circle cx="1326.66" cy="217.91" r="0.9" fill="#1b1b1b"/>
<circle cx="1306.24" cy="229.70" r="0.9" fill="#1b1b1b"/>
<circle cx="1285.82" cy="241.49" r="0.9" fill="#1b1b1b"/>
<circle cx="1265.40" cy="253.28" r="0.9" fill="#1b1b1b"/>
<circle cx="1244.98" cy="265.07" r="0.9" fill="#1b1b1b"/>
<circle cx="1224.56" cy="276.86" r="0.9" fill="#1b1b1b"/>
<circle cx="1204.14" cy="288.65" r="0.9" fill="#1b1b1b"/>
<circle cx="1183.72" cy="300.44" r="0.9" fill="#1b1b1b"/>
<circle cx="1408.34" cy="194.33" r="0.9" fill="#1b1b1b"/>
<circle cx="1387.92" cy="206.12" r="0.9" fill="#1b1b1b"/>
<circle cx="1367.50" cy="217.91" r="0.9" fill="#1b1b1b"/>
<circle cx="1347.08" cy="229.70" r="0.9" fill="#1b1b1b"/>
<circle cx="1326.66" cy="241.49" r="0.9" fill="#1b1b1b"/>
<circle cx="1306.24" cy="253.28" r="0.9" fill="#1b1b1b"/>
<circle cx="1285.82" cy="265.07" r="0.9" fill="#1b1b1b"/>
<circle cx="1265.40" cy="276.86" r="0.9" fill="#1b1b1b"/>
<circle cx="1244.98" cy="288.65" r="0.9" fill="#1b1b1b"/>
<circle cx="1224.56" cy="300.44" r="0.9" fill="#1b1b1b"/>
<circle cx="1204.14" cy="312.23" r="0.9" fill="#1b1b1b"/>
<circle cx="1428.76" cy="206.12" r="0.9" fill="#1b1b1b"/>
<circle cx="1408.34" cy="217.91" r="0.9" fill="#1b1b1b"/>
<circle cx="1387.92" cy="229.70" r="0.9" fill="#1b1b1b"/>
<circle cx="1367.50" cy="241.49" r="0.9" fill="#1b1b1b"/>
<circle cx="1347.08" cy="253.28" r="0.9" fill="#1b1b1b"/>
<circle cx="1326.66" cy="265.07" r="0.9" fill="#1b1b1b"/>
<circle cx="1306.24" cy="276.86" r="0.9" fill="#1b1b1b"/>
<circle cx="1285.82" cy="288.65" r="0.9" fill="#1b1b1b"/>
<circle cx="1265.40" cy="300.44" r="0.9" fill="#1b1b1b"/>
<circle cx="1244.98" cy="312.23" r="0.9" fill="#1b1b1b"/>
<circle cx="1224.56" cy="324.02" r="0.9" fill="#1b1b1b"/>
<circle cx="1449.18" cy="217.91" r="0.9" fill="#1b1b1b"/>
<circle cx="1428.76" cy="229.70" r="0.9" fill="#1b1b1b"/>
<circle cx="1408.34" cy="241.49" r="0.9" fill="#1b1b1b"/>
<circle cx="1387.92" cy="253.28" r="0.9" fill="#1b1b1b"/>
<circle cx="1367.50" cy="265.07" r="0.9" fill="#1b1b1b"/>
<circle cx="1347.08" cy="276.86" r="0.9" fill="#1b1b1b"/>
<circle cx="1326.66" cy="288.65" r="0.9" fill="#1b1b1b"/>
<circle cx="1306.24" cy="300.44" r="0.9" fill="#1b1b1b"/>
<circle cx="1285.82" cy="312.23" r="0.9" fill="#1b1b1b"/>
<circle cx="1265.40" cy="324.02" r="0.9" fill="#1b1b1b"/>
<circle cx="1244.98" cy="335.81" r="0.9" fill="#1b1b1b"/>
<circle cx="1469.60" cy="229.70" r="0.9" fill="#1b1b1b"/>
<circle cx="1449.18" cy="241.49" r="0.9" fill="#1b1b1b"/>
<circle cx="1428.76" cy="253.28" r="0.9" fill="#1b1b1b"/>
<circle cx="1408.34" cy="265.07" r="0.9" fill="#1b1b1b"/>
<circle cx="1387.92" cy="276.86" r="0.9" fill="#1b1b1b"/>
<circle cx="1367.50" cy="288.65" r="0.9" fill="#1b1b1b"/>
<circle cx="1347.08" cy="300.44" r="0.9" fill="#1b1b1b"/>
<circle cx="1326.66" cy="312.23" r="0.9" fill="#1b1b1b"/>
<circle cx="1306.24" cy="324.02" r="0.9" fill="#1b1b1b"/>
<circle cx="1285.82" cy="335.81" r="0.9" fill="#1b1b1b"/>
<circle cx="1265.40" cy="347.60" r="0.9" fill="#1b1b1b"/>
<polyline points="1061.20,229.40 1265.40,347.30 1469.60,229.40" fill="none" stroke="#1b1b1b" stroke-width="1.4"/><g transform="translate(843 0)">
<polygon points="753.00,35.80 744.70,44.20 761.30,44.20" fill="#dfe6ee"/>
<polygon points="753.00,185.30 743.90,176.00 762.20,176.00" fill="#dfe6ee"/>
<polygon points="678.00,110.50 687.30,101.60 687.30,119.40" fill="#dfe6ee"/>
<polygon points="828.30,110.50 818.80,101.60 818.80,119.40" fill="#dfe6ee"/>
<polygon points="730.10,41.90 720.80,45.40 713.10,50.40 705.40,56.20 701.80,59.60 699.40,57.40 698.80,67.00 708.50,66.00 706.00,63.80 713.10,57.00 720.80,51.60 732.00,46.60" fill="#dfe6ee"/>
<polygon points="776.10,41.90 785.40,45.40 793.10,50.40 800.80,56.20 804.40,59.60 806.80,57.40 807.40,67.00 797.70,66.00 800.20,63.80 793.10,57.00 785.40,51.60 774.20,46.60" fill="#dfe6ee"/>
<polygon points="749.90,67.90 746.90,70.80 739.80,71.40 726.70,75.30 717.80,79.50 713.00,85.00 710.10,90.50 709.00,95.50 710.70,108.00 714.90,131.70 746.90,154.80 748.60,156.80 757.60,156.80 759.30,154.80 791.30,131.70 795.50,108.00 797.20,95.50 796.10,90.50 793.20,85.00 788.40,79.50 779.50,75.30 766.40,71.40 759.30,70.80 756.30,67.90" fill="#e1e8ef"/>
<polygon points="747.50,71.60 741.20,72.20 719.90,82.30 747.90,98.50 758.30,98.50 786.30,82.30 765.00,72.20 758.70,71.60" fill="#f8fafb"/>
<polygon points="712.30,94.20 743.40,108.80 746.30,120.00 747.30,153.40 716.20,131.00" fill="#f8fafb"/>
<polygon points="793.90,94.20 762.80,108.80 759.90,120.00 758.90,153.40 790.00,131.00" fill="#f8fafb"/>
<polygon points="764.00,109.40 758.55,118.84 747.65,118.84 742.20,109.40 747.65,99.96 758.55,99.96" fill="#f8fafb"/>
<circle cx="753.1" cy="109.60000000000001" r="10.3" fill="#f8fafb"/>
<path d="M753.1 76.8 V102.8 M751.1 76.8 H755.1 M751.1 102.8 H755.1" stroke="#c9dbe6" stroke-width="1.4" fill="none"/>
<line x1="746.8" y1="112.6" x2="723.5" y2="126.6" stroke="#bfeec0" stroke-width="1.1"/>
<line x1="759.2" y1="112.6" x2="783.5" y2="126.8" stroke="#cfdfe9" stroke-width="1.1"/>
<text transform="matrix(0.94 0.42 -0.66 0.40 740.0 79.4)" x="0" y="0" font-size="13" fill="#000" style="font-family:'Liberation Sans',sans-serif">Top</text>
<text transform="matrix(0.67 0.53 0 1 718.2 120.6)" x="0" y="0" font-size="14" fill="#000" style="font-family:'Liberation Sans',sans-serif">Front</text>
<text transform="matrix(0.69 -0.54 0 1 764.4 138.4)" x="0" y="0" font-size="14" fill="#000" style="font-family:'Liberation Sans',sans-serif">Right</text>
<line x1="715.3" y1="131.3" x2="704.5" y2="82.6" stroke="#0a0aff" stroke-width="1.3"/>
<line x1="715.3" y1="131.3" x2="752.6" y2="165.4" stroke="#e8141c" stroke-width="1.3"/>
<rect x="714.6" y="129.9" width="1.8" height="1.8" fill="#18c818"/>
<text x="701.6" y="79.0" font-size="9.6" fill="#0a0aff" stroke="#0a0aff" stroke-width="0.35" style="font-family:'Liberation Sans',sans-serif">Z</text>
<text x="755.4" y="173.0" font-size="9.6" fill="#f0141c" stroke="#f0141c" stroke-width="0.35" style="font-family:'Liberation Sans',sans-serif">X</text>
<polygon points="790.40,156.90 801.90,160.50 790.40,164.20 779.20,160.50" fill="#f3f3f3"/>
<polygon points="779.20,160.50 790.40,164.20 790.40,179.60 779.20,175.60" fill="#c4c4c4"/>
<polygon points="801.90,160.50 790.40,164.20 790.40,179.60 801.90,175.40" fill="#dfdfdf"/>
<polygon points="790.40,156.90 801.90,160.50 801.90,175.40 790.40,179.60 779.20,175.60 779.20,160.50" fill="none" stroke="#8a7f7a" stroke-opacity="0.55" stroke-width="0.7"/>
<polygon points="805.80,164.00 820.10,164.00 813.00,171.20" fill="#3c3c3c"/>
</g><line x1="1658.80" y1="414.90" x2="1670.00" y2="421.30" stroke="#8c2222" stroke-width="2.1"/>
<line x1="1658.80" y1="414.90" x2="1667.00" y2="410.20" stroke="#1c8a1c" stroke-width="2.1"/>
<line x1="1658.80" y1="414.90" x2="1658.80" y2="402.00" stroke="#26188c" stroke-width="2.1"/>
<text x="1661.7" y="401.9" font-size="9.8" fill="#000" style="font-family:'Liberation Sans',sans-serif">Z</text>
<text x="1669.6" y="410.8" font-size="9.8" fill="#000" style="font-family:'Liberation Sans',sans-serif">Y</text>
<text x="1672.7" y="421.9" font-size="9.8" fill="#000" style="font-family:'Liberation Sans',sans-serif">X</text>
</svg></div>
</div>
<div class="win" style="left:844px;top:443px;width:843px;height:442px">
<div class="tb"></div>
<svg style="position:absolute;left:7.5px;top:8px" width="18" height="18" viewBox="0 0 18 18">
<defs><linearGradient id="fg" x1="0" y1="0" x2="0" y2="1"><stop offset="0" stop-color="#ff2424"/><stop offset="1" stop-color="#c81212"/></linearGradient></defs>
<path d="M0.9 1.5 H9.0 V4.9 H4.3 V7.2 H7.6 V10.2 H4.3 V16.4 H0.9 Z" fill="url(#fg)" stroke="#8c0f0f" stroke-width="0.6"/>
<g transform="translate(10.4,10.9)">
<path d="M5.64 -0.80 L5.64 0.80 L3.87 0.99 L3.44 2.04 L4.56 3.42 L3.42 4.56 L2.04 3.44 L0.99 3.87 L0.80 5.64 L-0.80 5.64 L-0.99 3.87 L-2.04 3.44 L-3.42 4.56 L-4.56 3.42 L-3.44 2.04 L-3.87 0.99 L-5.64 0.80 L-5.64 -0.80 L-3.87 -0.99 L-3.44 -2.04 L-4.56 -3.42 L-3.42 -4.56 L-2.04 -3.44 L-0.99 -3.87 L-0.80 -5.64 L0.80 -5.64 L0.99 -3.87 L2.04 -3.44 L3.42 -4.56 L4.56 -3.42 L3.44 -2.04 L3.87 -0.99 Z" fill="#4a72b0" stroke="#2d4d85" stroke-width="0.6"/>
<circle r="1.7" fill="#eef2f8" stroke="#2d4d85" stroke-width="0.5"/>
</g></svg>
<div class="ttl" style="left:28px;top:10px">Deckel 10x10 : 1*</div>
<div class="btn" style="left:735px"><svg width="30" height="16" viewBox="1 1 30 16"><rect x="10.5" y="8.5" width="10" height="4" rx="1" fill="#e9e9e4" stroke="#4a5160" stroke-width="1"/></svg></div><div class="btn" style="left:769px"><svg width="30" height="16" viewBox="1 1 30 16"><rect x="10.5" y="4.5" width="10" height="8" rx="1" fill="#f4f6fa" stroke="#4a5160" stroke-width="1"/><rect x="13.5" y="7.5" width="4" height="2" fill="#c6d2e3" stroke="#4a5160" stroke-width="1"/></svg></div><div class="btn" style="left:803px"><svg width="30" height="16" viewBox="1 1 30 16"><path d="M10.3 4.6 L13.9 4.6 L15.5 6.6 L17.1 4.6 L20.7 4.6 L17.5 8.5 L20.7 12.4 L17.1 12.4 L15.5 10.4 L13.9 12.4 L10.3 12.4 L13.5 8.5 Z" fill="#f1f2f2" stroke="#454b59" stroke-width="1.1" stroke-linejoin="round"/></svg></div>
<div class="vp" style="left:7px;top:26px;width:827px;height:407px">
<svg width="827" height="407" viewBox="852 470 827 407">
<defs><linearGradient id="bg_w3" gradientUnits="userSpaceOnUse" x1="0" y1="470" x2="0" y2="877"><stop offset="0" stop-color="#4f8cae"/><stop offset="1" stop-color="#3a617a"/></linearGradient></defs>
<polygon points="1061.40,671.30 1265.40,789.20 1469.40,671.30 1469.40,674.30 1265.40,792.20 1061.40,674.30" fill="#4c4c4c" stroke="#1b1b1b" stroke-width="1" stroke-linejoin="round"/>
<line x1="1061.40" y1="671.30" x2="1061.40" y2="674.90" stroke="#1b1b1b" stroke-width="1.2"/>
<line x1="1469.40" y1="671.30" x2="1469.40" y2="674.90" stroke="#1b1b1b" stroke-width="1.2"/>
<line x1="1081.80" y1="683.09" x2="1081.80" y2="686.69" stroke="#1b1b1b" stroke-width="1.2"/>
<line x1="1449.00" y1="683.09" x2="1449.00" y2="686.69" stroke="#1b1b1b" stroke-width="1.2"/>
<line x1="1102.20" y1="694.88" x2="1102.20" y2="698.48" stroke="#1b1b1b" stroke-width="1.2"/>
<line x1="1428.60" y1="694.88" x2="1428.60" y2="698.48" stroke="#1b1b1b" stroke-width="1.2"/>
<line x1="1122.60" y1="706.67" x2="1122.60" y2="710.27" stroke="#1b1b1b" stroke-width="1.2"/>
<line x1="1408.20" y1="706.67" x2="1408.20" y2="710.27" stroke="#1b1b1b" stroke-width="1.2"/>
<line x1="1143.00" y1="718.46" x2="1143.00" y2="722.06" stroke="#1b1b1b" stroke-width="1.2"/>
<line x1="1387.80" y1="718.46" x2="1387.80" y2="722.06" stroke="#1b1b1b" stroke-width="1.2"/>
<line x1="1163.40" y1="730.25" x2="1163.40" y2="733.85" stroke="#1b1b1b" stroke-width="1.2"/>
<line x1="1367.40" y1="730.25" x2="1367.40" y2="733.85" stroke="#1b1b1b" stroke-width="1.2"/>
<line x1="1183.80" y1="742.04" x2="1183.80" y2="745.64" stroke="#1b1b1b" stroke-width="1.2"/>
<line x1="1347.00" y1="742.04" x2="1347.00" y2="745.64" stroke="#1b1b1b" stroke-width="1.2"/>
<line x1="1204.20" y1="753.83" x2="1204.20" y2="757.43" stroke="#1b1b1b" stroke-width="1.2"/>
<line x1="1326.60" y1="753.83" x2="1326.60" y2="757.43" stroke="#1b1b1b" stroke-width="1.2"/>
<line x1="1224.60" y1="765.62" x2="1224.60" y2="769.22" stroke="#1b1b1b" stroke-width="1.2"/>
<line x1="1306.20" y1="765.62" x2="1306.20" y2="769.22" stroke="#1b1b1b" stroke-width="1.2"/>
<line x1="1245.00" y1="777.41" x2="1245.00" y2="781.01" stroke="#1b1b1b" stroke-width="1.2"/>
<line x1="1285.80" y1="777.41" x2="1285.80" y2="781.01" stroke="#1b1b1b" stroke-width="1.2"/>
<line x1="1265.40" y1="789.20" x2="1265.40" y2="792.80" stroke="#1b1b1b" stroke-width="1.2"/>
<line x1="1265.40" y1="789.20" x2="1265.40" y2="792.80" stroke="#1b1b1b" stroke-width="1.2"/>
<polygon points="1265.40,553.40 1469.40,671.30 1265.40,789.20 1061.40,671.30" fill="#828282"/>
<path d="M1265.40 553.40 L1061.40 671.30 L1064.87 673.30 L1268.87 555.40 Z M1285.80 565.19 L1081.80 683.09 L1085.27 685.09 L1289.27 567.19 Z M1306.20 576.98 L1102.20 694.88 L1105.67 696.88 L1309.67 578.98 Z M1326.60 588.77 L1122.60 706.67 L1126.07 708.67 L1330.07 590.77 Z M1347.00 600.56 L1143.00 718.46 L1146.47 720.46 L1350.47 602.56 Z M1367.40 612.35 L1163.40 730.25 L1166.87 732.25 L1370.87 614.35 Z M1387.80 624.14 L1183.80 742.04 L1187.27 744.04 L1391.27 626.14 Z M1408.20 635.93 L1204.20 753.83 L1207.67 755.83 L1411.67 637.93 Z M1428.60 647.72 L1224.60 765.62 L1228.07 767.62 L1432.07 649.72 Z M1449.00 659.51 L1245.00 777.41 L1248.47 779.41 L1452.47 661.51 Z " fill="#b7b7b7"/>
<path d="M1265.40 553.40 L1469.40 671.30 L1465.93 673.30 L1261.93 555.40 Z M1245.00 565.19 L1449.00 683.09 L1445.53 685.09 L1241.53 567.19 Z M1224.60 576.98 L1428.60 694.88 L1425.13 696.88 L1221.13 578.98 Z M1204.20 588.77 L1408.20 706.67 L1404.73 708.67 L1200.73 590.77 Z M1183.80 600.56 L1387.80 718.46 L1384.33 720.46 L1180.33 602.56 Z M1163.40 612.35 L1367.40 730.25 L1363.93 732.25 L1159.93 614.35 Z M1143.00 624.14 L1347.00 742.04 L1343.53 744.04 L1139.53 626.14 Z M1122.60 635.93 L1326.60 753.83 L1323.13 755.83 L1119.13 637.93 Z M1102.20 647.72 L1306.20 765.62 L1302.73 767.62 L1098.73 649.72 Z M1081.80 659.51 L1285.80 777.41 L1282.33 779.41 L1078.33 661.51 Z " fill="#b7b7b7"/>
<path d="M1268.38 555.12 L1064.38 673.02 L1064.87 673.30 L1268.87 555.40 Z M1288.78 566.91 L1084.78 684.81 L1085.27 685.09 L1289.27 567.19 Z M1309.18 578.70 L1105.18 696.60 L1105.67 696.88 L1309.67 578.98 Z M1329.58 590.49 L1125.58 708.39 L1126.07 708.67 L1330.07 590.77 Z M1349.98 602.28 L1145.98 720.18 L1146.47 720.46 L1350.47 602.56 Z M1370.38 614.07 L1166.38 731.97 L1166.87 732.25 L1370.87 614.35 Z M1390.78 625.86 L1186.78 743.76 L1187.27 744.04 L1391.27 626.14 Z M1411.18 637.65 L1207.18 755.55 L1207.67 755.83 L1411.67 637.93 Z M1431.58 649.44 L1227.58 767.34 L1228.07 767.62 L1432.07 649.72 Z M1451.98 661.23 L1247.98 779.13 L1248.47 779.41 L1452.47 661.51 Z " fill="#9c9c9c" fill-opacity="0.6"/>
<path d="M1262.42 555.12 L1466.42 673.02 L1465.93 673.30 L1261.93 555.40 Z M1242.02 566.91 L1446.02 684.81 L1445.53 685.09 L1241.53 567.19 Z M1221.62 578.70 L1425.62 696.60 L1425.13 696.88 L1221.13 578.98 Z M1201.22 590.49 L1405.22 708.39 L1404.73 708.67 L1200.73 590.77 Z M1180.82 602.28 L1384.82 720.18 L1384.33 720.46 L1180.33 602.56 Z M1160.42 614.07 L1364.42 731.97 L1363.93 732.25 L1159.93 614.35 Z M1140.02 625.86 L1344.02 743.76 L1343.53 744.04 L1139.53 626.14 Z M1119.62 637.65 L1323.62 755.55 L1323.13 755.83 L1119.13 637.93 Z M1099.22 649.44 L1303.22 767.34 L1302.73 767.62 L1098.73 649.72 Z M1078.82 661.23 L1282.82 779.13 L1282.33 779.41 L1078.33 661.51 Z " fill="#9c9c9c" fill-opacity="0.6"/>
<path d="M1265.40 553.40 L1061.40 671.30 M1265.40 553.40 L1469.40 671.30 M1285.80 565.19 L1081.80 683.09 M1245.00 565.19 L1449.00 683.09 M1306.20 576.98 L1102.20 694.88 M1224.60 576.98 L1428.60 694.88 M1326.60 588.77 L1122.60 706.67 M1204.20 588.77 L1408.20 706.67 M1347.00 600.56 L1143.00 718.46 M1183.80 600.56 L1387.80 718.46 M1367.40 612.35 L1163.40 730.25 M1163.40 612.35 L1367.40 730.25 M1387.80 624.14 L1183.80 742.04 M1143.00 624.14 L1347.00 742.04 M1408.20 635.93 L1204.20 753.83 M1122.60 635.93 L1326.60 753.83 M1428.60 647.72 L1224.60 765.62 M1102.20 647.72 L1306.20 765.62 M1449.00 659.51 L1245.00 777.41 M1081.80 659.51 L1285.80 777.41 M1469.40 671.30 L1265.40 789.20 M1061.40 671.30 L1265.40 789.20 " fill="none" stroke="#1b1b1b" stroke-width="1.2"/>
<circle cx="1265.40" cy="553.60" r="0.85" fill="#1b1b1b"/>
<circle cx="1245.00" cy="565.39" r="0.85" fill="#1b1b1b"/>
<circle cx="1224.60" cy="577.18" r="0.85" fill="#1b1b1b"/>
<circle cx="1204.20" cy="588.97" r="0.85" fill="#1b1b1b"/>
<circle cx="1183.80" cy="600.76" r="0.85" fill="#1b1b1b"/>
<circle cx="1163.40" cy="612.55" r="0.85" fill="#1b1b1b"/>
<circle cx="1143.00" cy="624.34" r="0.85" fill="#1b1b1b"/>
<circle cx="1122.60" cy="636.13" r="0.85" fill="#1b1b1b"/>
<circle cx="1102.20" cy="647.92" r="0.85" fill="#1b1b1b"/>
<circle cx="1081.80" cy="659.71" r="0.85" fill="#1b1b1b"/>
<circle cx="1061.40" cy="671.50" r="0.85" fill="#1b1b1b"/>
<circle cx="1285.80" cy="565.39" r="0.85" fill="#1b1b1b"/>
<circle cx="1265.40" cy="577.18" r="0.85" fill="#1b1b1b"/>
<circle cx="1245.00" cy="588.97" r="0.85" fill="#1b1b1b"/>
<circle cx="1224.60" cy="600.76" r="0.85" fill="#1b1b1b"/>
<circle cx="1204.20" cy="612.55" r="0.85" fill="#1b1b1b"/>
<circle cx="1183.80" cy="624.34" r="0.85" fill="#1b1b1b"/>
<circle cx="1163.40" cy="636.13" r="0.85" fill="#1b1b1b"/>
<circle cx="1143.00" cy="647.92" r="0.85" fill="#1b1b1b"/>
<circle cx="1122.60" cy="659.71" r="0.85" fill="#1b1b1b"/>
<circle cx="1102.20" cy="671.50" r="0.85" fill="#1b1b1b"/>
<circle cx="1081.80" cy="683.29" r="0.85" fill="#1b1b1b"/>
<circle cx="1306.20" cy="577.18" r="0.85" fill="#1b1b1b"/>
<circle cx="1285.80" cy="588.97" r="0.85" fill="#1b1b1b"/>
<circle cx="1265.40" cy="600.76" r="0.85" fill="#1b1b1b"/>
<circle cx="1245.00" cy="612.55" r="0.85" fill="#1b1b1b"/>
<circle cx="1224.60" cy="624.34" r="0.85" fill="#1b1b1b"/>
<circle cx="1204.20" cy="636.13" r="0.85" fill="#1b1b1b"/>
<circle cx="1183.80" cy="647.92" r="0.85" fill="#1b1b1b"/>
<circle cx="1163.40" cy="659.71" r="0.85" fill="#1b1b1b"/>
<circle cx="1143.00" cy="671.50" r="0.85" fill="#1b1b1b"/>
<circle cx="1122.60" cy="683.29" r="0.85" fill="#1b1b1b"/>
<circle cx="1102.20" cy="695.08" r="0.85" fill="#1b1b1b"/>
<circle cx="1326.60" cy="588.97" r="0.85" fill="#1b1b1b"/>
<circle cx="1306.20" cy="600.76" r="0.85" fill="#1b1b1b"/>
<circle cx="1285.80" cy="612.55" r="0.85" fill="#1b1b1b"/>
<circle cx="1265.40" cy="624.34" r="0.85" fill="#1b1b1b"/>
<circle cx="1245.00" cy="636.13" r="0.85" fill="#1b1b1b"/>
<circle cx="1224.60" cy="647.92" r="0.85" fill="#1b1b1b"/>
<circle cx="1204.20" cy="659.71" r="0.85" fill="#1b1b1b"/>
<circle cx="1183.80" cy="671.50" r="0.85" fill="#1b1b1b"/>
<circle cx="1163.40" cy="683.29" r="0.85" fill="#1b1b1b"/>
<circle cx="1143.00" cy="695.08" r="0.85" fill="#1b1b1b"/>
<circle cx="1122.60" cy="706.87" r="0.85" fill="#1b1b1b"/>
<circle cx="1347.00" cy="600.76" r="0.85" fill="#1b1b1b"/>
<circle cx="1326.60" cy="612.55" r="0.85" fill="#1b1b1b"/>
<circle cx="1306.20" cy="624.34" r="0.85" fill="#1b1b1b"/>
<circle cx="1285.80" cy="636.13" r="0.85" fill="#1b1b1b"/>
<circle cx="1265.40" cy="647.92" r="0.85" fill="#1b1b1b"/>
<circle cx="1245.00" cy="659.71" r="0.85" fill="#1b1b1b"/>
<circle cx="1224.60" cy="671.50" r="0.85" fill="#1b1b1b"/>
<circle cx="1204.20" cy="683.29" r="0.85" fill="#1b1b1b"/>
<circle cx="1183.80" cy="695.08" r="0.85" fill="#1b1b1b"/>
<circle cx="1163.40" cy="706.87" r="0.85" fill="#1b1b1b"/>
<circle cx="1143.00" cy="718.66" r="0.85" fill="#1b1b1b"/>
<circle cx="1367.40" cy="612.55" r="0.85" fill="#1b1b1b"/>
<circle cx="1347.00" cy="624.34" r="0.85" fill="#1b1b1b"/>
<circle cx="1326.60" cy="636.13" r="0.85" fill="#1b1b1b"/>
<circle cx="1306.20" cy="647.92" r="0.85" fill="#1b1b1b"/>
<circle cx="1285.80" cy="659.71" r="0.85" fill="#1b1b1b"/>
<circle cx="1265.40" cy="671.50" r="0.85" fill="#1b1b1b"/>
<circle cx="1245.00" cy="683.29" r="0.85" fill="#1b1b1b"/>
<circle cx="1224.60" cy="695.08" r="0.85" fill="#1b1b1b"/>
<circle cx="1204.20" cy="706.87" r="0.85" fill="#1b1b1b"/>
<circle cx="1183.80" cy="718.66" r="0.85" fill="#1b1b1b"/>
<circle cx="1163.40" cy="730.45" r="0.85" fill="#1b1b1b"/>
<circle cx="1387.80" cy="624.34" r="0.85" fill="#1b1b1b"/>
<circle cx="1367.40" cy="636.13" r="0.85" fill="#1b1b1b"/>
<circle cx="1347.00" cy="647.92" r="0.85" fill="#1b1b1b"/>
<circle cx="1326.60" cy="659.71" r="0.85" fill="#1b1b1b"/>
<circle cx="1306.20" cy="671.50" r="0.85" fill="#1b1b1b"/>
<circle cx="1285.80" cy="683.29" r="0.85" fill="#1b1b1b"/>
<circle cx="1265.40" cy="695.08" r="0.85" fill="#1b1b1b"/>
<circle cx="1245.00" cy="706.87" r="0.85" fill="#1b1b1b"/>
<circle cx="1224.60" cy="718.66" r="0.85" fill="#1b1b1b"/>
<circle cx="1204.20" cy="730.45" r="0.85" fill="#1b1b1b"/>
<circle cx="1183.80" cy="742.24" r="0.85" fill="#1b1b1b"/>
<circle cx="1408.20" cy="636.13" r="0.85" fill="#1b1b1b"/>
<circle cx="1387.80" cy="647.92" r="0.85" fill="#1b1b1b"/>
<circle cx="1367.40" cy="659.71" r="0.85" fill="#1b1b1b"/>
<circle cx="1347.00" cy="671.50" r="0.85" fill="#1b1b1b"/>
<circle cx="1326.60" cy="683.29" r="0.85" fill="#1b1b1b"/>
<circle cx="1306.20" cy="695.08" r="0.85" fill="#1b1b1b"/>
<circle cx="1285.80" cy="706.87" r="0.85" fill="#1b1b1b"/>
<circle cx="1265.40" cy="718.66" r="0.85" fill="#1b1b1b"/>
<circle cx="1245.00" cy="730.45" r="0.85" fill="#1b1b1b"/>
<circle cx="1224.60" cy="742.24" r="0.85" fill="#1b1b1b"/>
<circle cx="1204.20" cy="754.03" r="0.85" fill="#1b1b1b"/>
<circle cx="1428.60" cy="647.92" r="0.85" fill="#1b1b1b"/>
<circle cx="1408.20" cy="659.71" r="0.85" fill="#1b1b1b"/>
<circle cx="1387.80" cy="671.50" r="0.85" fill="#1b1b1b"/>
<circle cx="1367.40" cy="683.29" r="0.85" fill="#1b1b1b"/>
<circle cx="1347.00" cy="695.08" r="0.85" fill="#1b1b1b"/>
<circle cx="1326.60" cy="706.87" r="0.85" fill="#1b1b1b"/>
<circle cx="1306.20" cy="718.66" r="0.85" fill="#1b1b1b"/>
<circle cx="1285.80" cy="730.45" r="0.85" fill="#1b1b1b"/>
<circle cx="1265.40" cy="742.24" r="0.85" fill="#1b1b1b"/>
<circle cx="1245.00" cy="754.03" r="0.85" fill="#1b1b1b"/>
<circle cx="1224.60" cy="765.82" r="0.85" fill="#1b1b1b"/>
<circle cx="1449.00" cy="659.71" r="0.85" fill="#1b1b1b"/>
<circle cx="1428.60" cy="671.50" r="0.85" fill="#1b1b1b"/>
<circle cx="1408.20" cy="683.29" r="0.85" fill="#1b1b1b"/>
<circle cx="1387.80" cy="695.08" r="0.85" fill="#1b1b1b"/>
<circle cx="1367.40" cy="706.87" r="0.85" fill="#1b1b1b"/>
<circle cx="1347.00" cy="718.66" r="0.85" fill="#1b1b1b"/>
<circle cx="1326.60" cy="730.45" r="0.85" fill="#1b1b1b"/>
<circle cx="1306.20" cy="742.24" r="0.85" fill="#1b1b1b"/>
<circle cx="1285.80" cy="754.03" r="0.85" fill="#1b1b1b"/>
<circle cx="1265.40" cy="765.82" r="0.85" fill="#1b1b1b"/>
<circle cx="1245.00" cy="777.61" r="0.85" fill="#1b1b1b"/>
<circle cx="1469.40" cy="671.50" r="0.85" fill="#1b1b1b"/>
<circle cx="1449.00" cy="683.29" r="0.85" fill="#1b1b1b"/>
<circle cx="1428.60" cy="695.08" r="0.85" fill="#1b1b1b"/>
<circle cx="1408.20" cy="706.87" r="0.85" fill="#1b1b1b"/>
<circle cx="1387.80" cy="718.66" r="0.85" fill="#1b1b1b"/>
<circle cx="1367.40" cy="730.45" r="0.85" fill="#1b1b1b"/>
<circle cx="1347.00" cy="742.24" r="0.85" fill="#1b1b1b"/>
<circle cx="1326.60" cy="754.03" r="0.85" fill="#1b1b1b"/>
<circle cx="1306.20" cy="765.82" r="0.85" fill="#1b1b1b"/>
<circle cx="1285.80" cy="777.61" r="0.85" fill="#1b1b1b"/>
<circle cx="1265.40" cy="789.40" r="0.85" fill="#1b1b1b"/>
<polyline points="1061.40,671.30 1265.40,789.20 1469.40,671.30" fill="none" stroke="#1b1b1b" stroke-width="1.4"/>
<ellipse cx="1265.40" cy="566.69" rx="10.0" ry="5.8" fill="#a6a6a6" stroke="#1b1b1b" stroke-width="1.2"/><path d="M1256.59 566.04 A8.9 4.7 0 0 1 1272.01 563.55" fill="none" stroke="#f2f2f2" stroke-width="1.7" stroke-linecap="round"/><ellipse cx="1265.70" cy="568.39" rx="8.5" ry="4.3" fill="url(#bg_w3)" stroke="#1b1b1b" stroke-width="1.1"/><line x1="1271.93" y1="565.69" x2="1273.28" y2="563.12" stroke="#1b1b1b" stroke-width="1.1"/><line x1="1273.37" y1="567.15" x2="1275.10" y2="565.29" stroke="#1b1b1b" stroke-width="1.1"/>
<ellipse cx="1449.00" cy="672.80" rx="10.0" ry="5.8" fill="#a6a6a6" stroke="#1b1b1b" stroke-width="1.2"/><path d="M1440.19 672.15 A8.9 4.7 0 0 1 1455.61 669.66" fill="none" stroke="#f2f2f2" stroke-width="1.7" stroke-linecap="round"/><ellipse cx="1449.30" cy="674.50" rx="8.5" ry="4.3" fill="url(#bg_w3)" stroke="#1b1b1b" stroke-width="1.1"/><line x1="1455.53" y1="671.80" x2="1456.88" y2="669.23" stroke="#1b1b1b" stroke-width="1.1"/><line x1="1456.97" y1="673.26" x2="1458.70" y2="671.40" stroke="#1b1b1b" stroke-width="1.1"/>
<ellipse cx="1081.80" cy="672.80" rx="10.0" ry="5.8" fill="#a6a6a6" stroke="#1b1b1b" stroke-width="1.2"/><path d="M1072.99 672.15 A8.9 4.7 0 0 1 1088.41 669.66" fill="none" stroke="#f2f2f2" stroke-width="1.7" stroke-linecap="round"/><ellipse cx="1082.10" cy="674.50" rx="8.5" ry="4.3" fill="url(#bg_w3)" stroke="#1b1b1b" stroke-width="1.1"/><line x1="1088.33" y1="671.80" x2="1089.68" y2="669.23" stroke="#1b1b1b" stroke-width="1.1"/><line x1="1089.77" y1="673.26" x2="1091.50" y2="671.40" stroke="#1b1b1b" stroke-width="1.1"/>
<ellipse cx="1265.40" cy="778.91" rx="10.0" ry="5.8" fill="#a6a6a6" stroke="#1b1b1b" stroke-width="1.2"/><path d="M1256.59 778.26 A8.9 4.7 0 0 1 1272.01 775.77" fill="none" stroke="#f2f2f2" stroke-width="1.7" stroke-linecap="round"/><ellipse cx="1265.70" cy="780.61" rx="8.5" ry="4.3" fill="url(#bg_w3)" stroke="#1b1b1b" stroke-width="1.1"/><line x1="1271.93" y1="777.91" x2="1273.28" y2="775.34" stroke="#1b1b1b" stroke-width="1.1"/><line x1="1273.37" y1="779.37" x2="1275.10" y2="777.51" stroke="#1b1b1b" stroke-width="1.1"/><g transform="translate(843 443)">
<polygon points="753.00,35.80 744.70,44.20 761.30,44.20" fill="#dfe6ee"/>
<polygon points="753.00,185.30 743.90,176.00 762.20,176.00" fill="#dfe6ee"/>
<polygon points="678.00,110.50 687.30,101.60 687.30,119.40" fill="#dfe6ee"/>
<polygon points="828.30,110.50 818.80,101.60 818.80,119.40" fill="#dfe6ee"/>
<polygon points="730.10,41.90 720.80,45.40 713.10,50.40 705.40,56.20 701.80,59.60 699.40,57.40 698.80,67.00 708.50,66.00 706.00,63.80 713.10,57.00 720.80,51.60 732.00,46.60" fill="#dfe6ee"/>
<polygon points="776.10,41.90 785.40,45.40 793.10,50.40 800.80,56.20 804.40,59.60 806.80,57.40 807.40,67.00 797.70,66.00 800.20,63.80 793.10,57.00 785.40,51.60 774.20,46.60" fill="#dfe6ee"/>
<polygon points="749.90,67.90 746.90,70.80 739.80,71.40 726.70,75.30 717.80,79.50 713.00,85.00 710.10,90.50 709.00,95.50 710.70,108.00 714.90,131.70 746.90,154.80 748.60,156.80 757.60,156.80 759.30,154.80 791.30,131.70 795.50,108.00 797.20,95.50 796.10,90.50 793.20,85.00 788.40,79.50 779.50,75.30 766.40,71.40 759.30,70.80 756.30,67.90" fill="#e1e8ef"/>
<polygon points="747.50,71.60 741.20,72.20 719.90,82.30 747.90,98.50 758.30,98.50 786.30,82.30 765.00,72.20 758.70,71.60" fill="#f8fafb"/>
<polygon points="712.30,94.20 743.40,108.80 746.30,120.00 747.30,153.40 716.20,131.00" fill="#f8fafb"/>
<polygon points="793.90,94.20 762.80,108.80 759.90,120.00 758.90,153.40 790.00,131.00" fill="#f8fafb"/>
<polygon points="764.00,109.40 758.55,118.84 747.65,118.84 742.20,109.40 747.65,99.96 758.55,99.96" fill="#f8fafb"/>
<circle cx="753.1" cy="109.60000000000001" r="10.3" fill="#f8fafb"/>
<path d="M753.1 76.8 V102.8 M751.1 76.8 H755.1 M751.1 102.8 H755.1" stroke="#c9dbe6" stroke-width="1.4" fill="none"/>
<line x1="746.8" y1="112.6" x2="723.5" y2="126.6" stroke="#bfeec0" stroke-width="1.1"/>
<line x1="759.2" y1="112.6" x2="783.5" y2="126.8" stroke="#cfdfe9" stroke-width="1.1"/>
<text transform="matrix(0.94 0.42 -0.66 0.40 740.0 79.4)" x="0" y="0" font-size="13" fill="#000" style="font-family:'Liberation Sans',sans-serif">Top</text>
<text transform="matrix(0.67 0.53 0 1 718.2 120.6)" x="0" y="0" font-size="14" fill="#000" style="font-family:'Liberation Sans',sans-serif">Front</text>
<text transform="matrix(0.69 -0.54 0 1 764.4 138.4)" x="0" y="0" font-size="14" fill="#000" style="font-family:'Liberation Sans',sans-serif">Right</text>
<line x1="715.3" y1="131.3" x2="704.5" y2="82.6" stroke="#0a0aff" stroke-width="1.3"/>
<line x1="715.3" y1="131.3" x2="752.6" y2="165.4" stroke="#e8141c" stroke-width="1.3"/>
<rect x="714.6" y="129.9" width="1.8" height="1.8" fill="#18c818"/>
<text x="701.6" y="79.0" font-size="9.6" fill="#0a0aff" stroke="#0a0aff" stroke-width="0.35" style="font-family:'Liberation Sans',sans-serif">Z</text>
<text x="755.4" y="173.0" font-size="9.6" fill="#f0141c" stroke="#f0141c" stroke-width="0.35" style="font-family:'Liberation Sans',sans-serif">X</text>
<polygon points="790.40,156.90 801.90,160.50 790.40,164.20 779.20,160.50" fill="#f3f3f3"/>
<polygon points="779.20,160.50 790.40,164.20 790.40,179.60 779.20,175.60" fill="#c4c4c4"/>
<polygon points="801.90,160.50 790.40,164.20 790.40,179.60 801.90,175.40" fill="#dfdfdf"/>
<polygon points="790.40,156.90 801.90,160.50 801.90,175.40 790.40,179.60 779.20,175.60 779.20,160.50" fill="none" stroke="#8a7f7a" stroke-opacity="0.55" stroke-width="0.7"/>
<polygon points="805.80,164.00 820.10,164.00 813.00,171.20" fill="#3c3c3c"/>
</g><line x1="1658.80" y1="856.90" x2="1670.00" y2="863.30" stroke="#8c2222" stroke-width="2.1"/>
<line x1="1658.80" y1="856.90" x2="1667.00" y2="852.20" stroke="#1c8a1c" stroke-width="2.1"/>
<line x1="1658.80" y1="856.90" x2="1658.80" y2="844.00" stroke="#26188c" stroke-width="2.1"/>
<text x="1661.7" y="843.9" font-size="9.8" fill="#000" style="font-family:'Liberation Sans',sans-serif">Z</text>
<text x="1669.6" y="852.8" font-size="9.8" fill="#000" style="font-family:'Liberation Sans',sans-serif">Y</text>
<text x="1672.7" y="863.9" font-size="9.8" fill="#000" style="font-family:'Liberation Sans',sans-serif">X</text>
</svg></div>
</div>
</body></html>
